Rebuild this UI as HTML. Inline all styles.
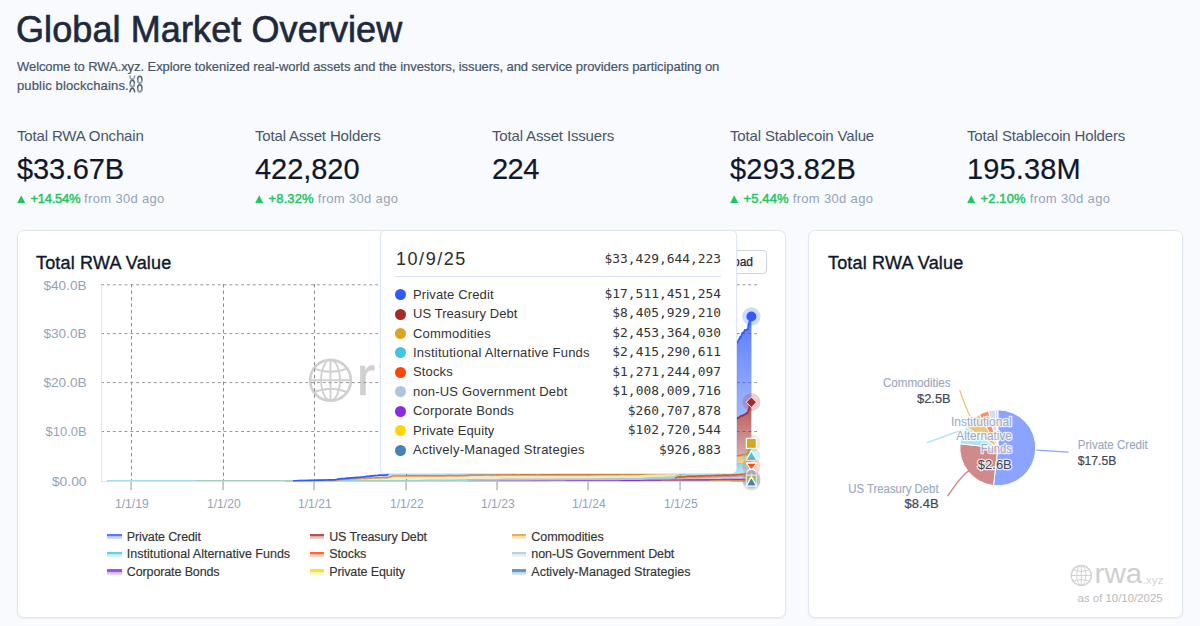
<!DOCTYPE html>
<html lang="en">
<head>
<meta charset="utf-8">
<title>Global Market Overview</title>
<style>
*{box-sizing:border-box;margin:0;padding:0}
html,body{width:1200px;height:626px;overflow:hidden}
body{background:#f8fafe;font-family:"Liberation Sans",sans-serif;color:#1e293b;position:relative}
h1{position:absolute;left:16px;top:7.5px;font-size:36px;font-weight:400;line-height:44px;color:#1e293b;letter-spacing:0.1px;-webkit-text-stroke:0.65px #1e293b;white-space:nowrap}
.sub{position:absolute;left:17px;top:57px;width:760px;white-space:nowrap;font-size:13px;line-height:19px;color:#475569;letter-spacing:-0.07px;-webkit-text-stroke:0.2px #475569}
.stat{position:absolute;top:126px;width:230px;white-space:nowrap}
.stat .l{font-size:15px;line-height:20px;color:#475569;letter-spacing:-0.15px}
.stat .v{font-size:29px;line-height:36px;color:#0f172a;margin-top:4.5px;letter-spacing:-0.55px;-webkit-text-stroke:0.2px #0f172a}
.stat .d{font-size:13px;line-height:18px;color:#94a3b8;margin-top:3.5px;letter-spacing:0.33px}
.stat .d svg{display:inline-block;margin-right:5.2px;vertical-align:0px}
.stat .d b{color:#22c55e;font-weight:400;-webkit-text-stroke:0.45px #22c55e;letter-spacing:-0.3px}
.card{position:absolute;background:#fff;border:1px solid #dfe5f1;border-radius:7px;box-shadow:0 1px 2px rgba(15,23,42,.05)}
.ctitle{position:absolute;font-size:18px;line-height:24px;color:#0f172a;-webkit-text-stroke:0.35px #0f172a;white-space:nowrap;letter-spacing:0.18px;margin-top:0.6px}
svg.ov{position:absolute;left:0;top:0;width:1200px;height:626px;overflow:visible}
.ax{font-size:13px;fill:#94a3b8;font-family:"Liberation Sans",sans-serif}
.lg{position:absolute;font-size:12.5px;line-height:16px;color:#333;white-space:nowrap;letter-spacing:0.03px;-webkit-text-stroke:0.15px #333}
.lg i{position:absolute;left:-19.6px;top:5.6px;width:14.4px;height:5.1px;display:block}
.tip{position:absolute;left:380px;top:230px;width:357px;height:244.4px;background:#fff;border:1px solid #dfe5f3;border-radius:5px;box-shadow:0 1px 3px rgba(15,23,42,.06)}
.tip .dt{position:absolute;left:15px;top:15.8px;font-size:18px;line-height:24px;color:#2b2b2b;letter-spacing:1.55px;white-space:nowrap}
.tip .tot{position:absolute;right:15px;top:19.5px}
.mono{font-family:"DejaVu Sans Mono","Liberation Mono",monospace;font-size:12.9px;line-height:16px;color:#333;white-space:nowrap}
.tip hr{position:absolute;left:14px;right:15px;top:45px;border:0;border-top:1px solid #d9e1f2;height:0}
.row{position:absolute;left:14px;right:15px;height:18px}
.row s{position:absolute;left:-0.4px;top:3.5px;width:11px;height:11px;border-radius:50%;display:block}
.row span{position:absolute;left:18px;top:1px;font-size:13px;line-height:16px;color:#333;white-space:nowrap;letter-spacing:0.22px}
.row em{position:absolute;right:0;top:0.4px;font-style:normal}
.btn{position:absolute;left:690px;top:250px;width:77px;height:24px;border:1px solid #cbd5e1;border-radius:4px;background:#fff;font-size:12px;line-height:22px;color:#1e293b;text-align:right;padding-right:13px;-webkit-text-stroke:0.25px #1e293b}
</style>
</head>
<body>
<h1>Global Market Overview</h1>
<div class="sub">Welcome to RWA.xyz. Explore tokenized real-world assets and the investors, issuers, and service providers participating on<br><span style="letter-spacing:0.14px">public blockchains.</span><svg width="15" height="18" viewBox="0 0 15 18" style="position:absolute;left:112px;top:18px"><g fill="none" stroke-width="1.4" stroke-linecap="round"><path d="M0.9 0.9C1.2 3 2.2 4.2 3.3 4.2S5.4 3 5.7 0.9" stroke="#8a9db0"/><ellipse cx="3.3" cy="8.5" rx="2.1" ry="3.3" stroke="#5d6268"/><path d="M1.1 9.3C1.4 11 2.3 11.9 3.3 11.9S5.2 11 5.5 9.3" stroke="#93a7b8"/><path d="M0.9 16.9C1.3 14.6 2.2 13.3 3.3 13.3S5.3 14.6 5.7 16.9" stroke="#55595f"/><ellipse cx="10.8" cy="4.7" rx="2.15" ry="3.4" stroke="#5d6268"/><path d="M8.5 5.5C8.8 7.3 9.7 8.2 10.8 8.2S12.8 7.3 13.1 5.5" stroke="#93a7b8"/><ellipse cx="10.8" cy="13.3" rx="2.15" ry="3.5" stroke="#5d6268"/><path d="M8.5 14.1C8.8 16 9.7 16.9 10.8 16.9S12.8 16 13.1 14.1" stroke="#93a7b8"/></g></svg></div>
<div class="stat" style="left:17px"><div class="l">Total RWA Onchain</div><div class="v" style="letter-spacing:-0.15px">$33.67B</div><div class="d"><svg width="8.4" height="8.4" viewBox="0 0 8.4 8.4"><path d="M4.2 0.2L8.3 8.2H0.1Z" fill="#22c55e"/></svg><b style="letter-spacing:-0.3px">+14.54%</b> from 30d ago</div></div>
<div class="stat" style="left:255px"><div class="l">Total Asset Holders</div><div class="v" style="letter-spacing:-0.05px">422,820</div><div class="d"><svg width="8.4" height="8.4" viewBox="0 0 8.4 8.4"><path d="M4.2 0.2L8.3 8.2H0.1Z" fill="#22c55e"/></svg><b style="letter-spacing:0.12px">+8.32%</b> from 30d ago</div></div>
<div class="stat" style="left:492px"><div class="l">Total Asset Issuers</div><div class="v" style="letter-spacing:-0.55px">224</div></div>
<div class="stat" style="left:730px"><div class="l">Total Stablecoin Value</div><div class="v" style="letter-spacing:0.23px">$293.82B</div><div class="d"><svg width="8.4" height="8.4" viewBox="0 0 8.4 8.4"><path d="M4.2 0.2L8.3 8.2H0.1Z" fill="#22c55e"/></svg><b style="letter-spacing:0.12px">+5.44%</b> from 30d ago</div></div>
<div class="stat" style="left:967px"><div class="l">Total Stablecoin Holders</div><div class="v" style="letter-spacing:0.12px">195.38M</div><div class="d"><svg width="8.4" height="8.4" viewBox="0 0 8.4 8.4"><path d="M4.2 0.2L8.3 8.2H0.1Z" fill="#22c55e"/></svg><b style="letter-spacing:0.12px">+2.10%</b> from 30d ago</div></div>
<div class="card" style="left:16.6px;top:230px;width:769.4px;height:388px"></div>
<div class="card" style="left:807.8px;top:230px;width:375.2px;height:388px"></div>
<div class="ctitle" style="left:36px;top:250px">Total RWA Value</div>
<div class="ctitle" style="left:828px;top:250px">Total RWA Value</div>
<div class="btn">Download</div>
<svg class="ov" viewBox="0 0 1200 626">
<defs>
<linearGradient id="gAMS" x1="0" y1="0" x2="0" y2="1"><stop offset="0" stop-color="#4682b4" stop-opacity="0.8"/><stop offset="1" stop-color="#4682b4" stop-opacity="0.2"/></linearGradient>
<linearGradient id="gPE" x1="0" y1="0" x2="0" y2="1"><stop offset="0" stop-color="#ffd700" stop-opacity="0.8"/><stop offset="1" stop-color="#ffd700" stop-opacity="0.2"/></linearGradient>
<linearGradient id="gCB" x1="0" y1="0" x2="0" y2="1"><stop offset="0" stop-color="#8a2be2" stop-opacity="0.8"/><stop offset="1" stop-color="#8a2be2" stop-opacity="0.2"/></linearGradient>
<linearGradient id="gNUS" x1="0" y1="0" x2="0" y2="1"><stop offset="0" stop-color="#b0c4de" stop-opacity="0.8"/><stop offset="1" stop-color="#b0c4de" stop-opacity="0.2"/></linearGradient>
<linearGradient id="gSTK" x1="0" y1="0" x2="0" y2="1"><stop offset="0" stop-color="#ff4500" stop-opacity="0.8"/><stop offset="1" stop-color="#ff4500" stop-opacity="0.2"/></linearGradient>
<linearGradient id="gINST" x1="0" y1="0" x2="0" y2="1"><stop offset="0" stop-color="#40c4e8" stop-opacity="0.8"/><stop offset="1" stop-color="#40c4e8" stop-opacity="0.2"/></linearGradient>
<linearGradient id="gCOM" x1="0" y1="0" x2="0" y2="1"><stop offset="0" stop-color="#daa520" stop-opacity="0.8"/><stop offset="1" stop-color="#daa520" stop-opacity="0.2"/></linearGradient>
<linearGradient id="gTRS" x1="0" y1="0" x2="0" y2="1"><stop offset="0" stop-color="#a52a2a" stop-opacity="0.8"/><stop offset="1" stop-color="#a52a2a" stop-opacity="0.2"/></linearGradient>
<linearGradient id="gPC" x1="0" y1="0" x2="0" y2="1"><stop offset="0" stop-color="#2e5bff" stop-opacity="0.8"/><stop offset="1" stop-color="#2e5bff" stop-opacity="0.2"/></linearGradient>
</defs>
<g fill="none" stroke="#d0d0d0"><circle cx="330.5" cy="380.3" r="20.4" stroke-width="2.7"/><g stroke-width="1.9"><ellipse cx="330.5" cy="380.3" rx="9.4" ry="20.4"/><path d="M330.5 360V400.6M310 380.3H351M312.6 368Q330.5 375.6 348.4 368M312.6 392.6Q330.5 385 348.4 392.6"/></g></g>
<text x="356.6" y="394.6" font-size="56" fill="#d0d0d0" stroke="#d0d0d0" stroke-width="0.5" letter-spacing="4.6" font-family="Liberation Sans,sans-serif">rwa</text>
<g stroke="#969696" stroke-width="1" stroke-dasharray="2.9 2.93" fill="none">
<path d="M101.2 284.8H758"/>
<path d="M101.2 333.6H758"/>
<path d="M101.2 382.6H758"/>
<path d="M101.2 431.5H758"/>
</g>
<g stroke="#8c8c8c" stroke-width="1" stroke-dasharray="3.4 3.1" fill="none">
<path d="M131.5 284V481"/>
<path d="M223.5 284V481"/>
<path d="M314.5 284V481"/>
<path d="M406.5 284V481"/>
<path d="M497.5 284V481"/>
<path d="M588.5 284V481"/>
<path d="M680.5 284V481"/>
</g>
<path d="M101.5 285V481.5H758" fill="none" stroke="#dde3f0" stroke-width="1"/>
<path d="M131.05 481.5V490.3" stroke="#a0a0a0" stroke-width="1.1"/>
<path d="M223.05 481.5V490.3" stroke="#a0a0a0" stroke-width="1.1"/>
<path d="M314.05 481.5V490.3" stroke="#a0a0a0" stroke-width="1.1"/>
<path d="M406.05 481.5V490.3" stroke="#a0a0a0" stroke-width="1.1"/>
<path d="M497.05 481.5V490.3" stroke="#a0a0a0" stroke-width="1.1"/>
<path d="M588.05 481.5V490.3" stroke="#a0a0a0" stroke-width="1.1"/>
<path d="M680.05 481.5V490.3" stroke="#a0a0a0" stroke-width="1.1"/>
<text class="ax" x="86.6" y="289.7" text-anchor="end" textLength="43.2" lengthAdjust="spacingAndGlyphs">$40.0B</text>
<text class="ax" x="86.6" y="338.2" text-anchor="end" textLength="43.2" lengthAdjust="spacingAndGlyphs">$30.0B</text>
<text class="ax" x="86.6" y="387.2" text-anchor="end" textLength="43.2" lengthAdjust="spacingAndGlyphs">$20.0B</text>
<text class="ax" x="86.6" y="436.2" text-anchor="end" textLength="41" lengthAdjust="spacingAndGlyphs">$10.0B</text>
<text class="ax" x="86.6" y="485.7" text-anchor="end" textLength="34.7" lengthAdjust="spacingAndGlyphs">$0.00</text>
<text class="ax" x="131.8" y="507.6" text-anchor="middle" textLength="33.7" lengthAdjust="spacingAndGlyphs">1/1/19</text>
<text class="ax" x="223.8" y="507.6" text-anchor="middle" textLength="33.7" lengthAdjust="spacingAndGlyphs">1/1/20</text>
<text class="ax" x="314.8" y="507.6" text-anchor="middle" textLength="33.7" lengthAdjust="spacingAndGlyphs">1/1/21</text>
<text class="ax" x="406.8" y="507.6" text-anchor="middle" textLength="33.7" lengthAdjust="spacingAndGlyphs">1/1/22</text>
<text class="ax" x="497.8" y="507.6" text-anchor="middle" textLength="33.7" lengthAdjust="spacingAndGlyphs">1/1/23</text>
<text class="ax" x="588.8" y="507.6" text-anchor="middle" textLength="33.7" lengthAdjust="spacingAndGlyphs">1/1/24</text>
<text class="ax" x="680.8" y="507.6" text-anchor="middle" textLength="33.7" lengthAdjust="spacingAndGlyphs">1/1/25</text>
<clipPath id="cp"><rect x="101" y="280" width="660" height="201.4"/></clipPath><g clip-path="url(#cp)">
<path d="M101 481 L109 481 L117 481 L125 481 L133 481 L141 481 L149 481 L157 481 L165 481 L173 481 L181 481 L189 481 L197 481 L205 481 L213 481 L221 481 L229 481 L237 481 L238.6 481 L240.2 481 L241.8 481 L243.4 481 L245 481 L246.6 481 L248.2 481 L249.8 481 L251.4 481 L253 481 L254.6 481 L256.2 481 L257.8 481 L259.4 481 L261 481 L262.6 481 L264.2 481 L265.8 481 L267.4 481 L269 481 L270.6 481 L272.2 481 L273.8 481 L275.4 481 L277 481 L278.6 481 L280.2 481 L281.8 481 L283.4 481 L285 481 L286.6 481 L288.2 481 L289.8 481 L291.4 481 L293 481 L294.6 481 L296.2 481 L297.8 481 L299.4 481 L301 481 L302.6 481 L304.2 481 L305.8 481 L307.4 481 L309 481 L310.6 481 L312.2 481 L313.8 481 L315.4 481 L317 481 L318.6 481 L320.2 481 L321.8 481 L323.4 481 L325 481 L326.6 481 L328.2 481 L329.8 481 L331.4 481 L333 481 L334.6 481 L336.2 481 L337.8 481 L339.4 481 L341 481 L342.6 481 L344.2 481 L345.8 481 L347.4 481 L349 481 L350.6 481 L352.2 481 L353.8 481 L355.4 481 L357 481 L358.6 481 L360.2 481 L361.8 481 L363.4 481 L365 481 L366.6 481 L368.2 481 L369.8 481 L371.4 481 L373 481 L374.6 481 L376.2 481 L377.8 481 L379.4 481 L381 481 L382.6 481 L384.2 481 L387.2 481 L390.2 481 L393.2 481 L396.2 481 L399.2 481 L402.2 481 L405.2 481 L408.2 481 L411.2 481 L414.2 481 L417.2 481 L420.2 481 L423.2 481 L426.2 481 L429.2 481 L432.2 481 L435.2 481 L438.2 481 L441.2 481 L444.2 481 L447.2 481 L450.2 481 L453.2 481 L456.2 481 L459.2 481 L462.2 481 L465.2 481 L468.2 481 L471.2 481 L474.2 481 L477.2 481 L480.2 481 L483.2 481 L486.2 481 L489.2 481 L492.2 481 L495.2 481 L498.2 481 L501.2 481 L504.2 481 L507.2 481 L510.2 481 L513.2 481 L516.2 481 L519.2 481 L522.2 481 L525.2 481 L528.2 481 L531.2 481 L534.2 481 L537.2 481 L540.2 481 L543.2 481 L546.2 481 L549.2 481 L552.2 481 L555.2 481 L558.2 481 L561.2 481 L564.2 481 L567.2 481 L570.2 481 L573.2 481 L576.2 481 L579.2 481 L582.2 481 L585.2 481 L588.2 481 L591.2 481 L594.2 481 L597.2 481 L600.2 481 L603.2 481 L606.2 481 L609.2 481 L612.2 481 L615.2 481 L618.2 481 L621.2 481 L624.2 481 L627.2 481 L630.2 481 L633.2 481 L636.2 481 L639.2 481 L642.2 481 L645.2 481 L648.2 481 L651.2 481 L654.2 481 L657.2 481 L660.2 481 L663.2 481 L666.2 481 L669.2 481 L672.2 481 L673.5 481 L674.8 481 L676.1 481 L677.4 481 L678.7 481 L680 481 L681.3 481 L682.6 481 L683.9 481 L685.2 481 L686.5 481 L687.8 481 L689.1 481 L690.4 481 L691.7 481 L693 481 L694.3 481 L695.6 481 L696.9 481 L698.2 481 L699.5 481 L700.8 481 L702.1 481 L703.4 481 L704.7 481 L706 481 L707.3 481 L708.6 481 L709.9 481 L711.2 481 L712.5 481 L713.8 481 L715.1 481 L716.4 481 L717.7 481 L719 481 L720.3 481 L721.6 481 L722.9 481 L724.2 481 L725.5 481 L726.8 481 L728.1 481 L729.4 481 L730.7 481 L732 481 L733.3 481 L734.6 481 L735.9 481 L736.5 481 L737.1 481 L737.7 481 L738.3 481 L738.9 481 L739.5 481 L740.1 481 L740.7 481 L741.3 481 L741.9 481 L742.5 481 L743.1 481 L743.7 481 L744.3 481 L744.9 481 L745.5 481 L746.1 481 L746.7 481 L747.3 481 L747.9 481 L748.5 481 L749.1 481 L749.7 481 L750.3 481 L750.9 481 L751.4 481 L751.4 481 L750.9 481 L750.3 481 L749.7 481 L749.1 481 L748.5 481 L747.9 481 L747.3 481 L746.7 481 L746.1 481 L745.5 481 L744.9 481 L744.3 481 L743.7 481 L743.1 481 L742.5 481 L741.9 481 L741.3 481 L740.7 481 L740.1 481 L739.5 481 L738.9 481 L738.3 481 L737.7 481 L737.1 481 L736.5 481 L735.9 481 L734.6 481 L733.3 481 L732 481 L730.7 481 L729.4 481 L728.1 481 L726.8 481 L725.5 481 L724.2 481 L722.9 481 L721.6 481 L720.3 481 L719 481 L717.7 481 L716.4 481 L715.1 481 L713.8 481 L712.5 481 L711.2 481 L709.9 481 L708.6 481 L707.3 481 L706 481 L704.7 481 L703.4 481 L702.1 481 L700.8 481 L699.5 481 L698.2 481 L696.9 481 L695.6 481 L694.3 481 L693 481 L691.7 481 L690.4 481 L689.1 481 L687.8 481 L686.5 481 L685.2 481 L683.9 481 L682.6 481 L681.3 481 L680 481 L678.7 481 L677.4 481 L676.1 481 L674.8 481 L673.5 481 L672.2 481 L669.2 481 L666.2 481 L663.2 481 L660.2 481 L657.2 481 L654.2 481 L651.2 481 L648.2 481 L645.2 481 L642.2 481 L639.2 481 L636.2 481 L633.2 481 L630.2 481 L627.2 481 L624.2 481 L621.2 481 L618.2 481 L615.2 481 L612.2 481 L609.2 481 L606.2 481 L603.2 481 L600.2 481 L597.2 481 L594.2 481 L591.2 481 L588.2 481 L585.2 481 L582.2 481 L579.2 481 L576.2 481 L573.2 481 L570.2 481 L567.2 481 L564.2 481 L561.2 481 L558.2 481 L555.2 481 L552.2 481 L549.2 481 L546.2 481 L543.2 481 L540.2 481 L537.2 481 L534.2 481 L531.2 481 L528.2 481 L525.2 481 L522.2 481 L519.2 481 L516.2 481 L513.2 481 L510.2 481 L507.2 481 L504.2 481 L501.2 481 L498.2 481 L495.2 481 L492.2 481 L489.2 481 L486.2 481 L483.2 481 L480.2 481 L477.2 481 L474.2 481 L471.2 481 L468.2 481 L465.2 481 L462.2 481 L459.2 481 L456.2 481 L453.2 481 L450.2 481 L447.2 481 L444.2 481 L441.2 481 L438.2 481 L435.2 481 L432.2 481 L429.2 481 L426.2 481 L423.2 481 L420.2 481 L417.2 481 L414.2 481 L411.2 481 L408.2 481 L405.2 481 L402.2 481 L399.2 481 L396.2 481 L393.2 481 L390.2 481 L387.2 481 L384.2 481 L382.6 481 L381 481 L379.4 481 L377.8 481 L376.2 481 L374.6 481 L373 481 L371.4 481 L369.8 481 L368.2 481 L366.6 481 L365 481 L363.4 481 L361.8 481 L360.2 481 L358.6 481 L357 481 L355.4 481 L353.8 481 L352.2 481 L350.6 481 L349 481 L347.4 481 L345.8 481 L344.2 481 L342.6 481 L341 481 L339.4 481 L337.8 481 L336.2 481 L334.6 481 L333 481 L331.4 481 L329.8 481 L328.2 481 L326.6 481 L325 481 L323.4 481 L321.8 481 L320.2 481 L318.6 481 L317 481 L315.4 481 L313.8 481 L312.2 481 L310.6 481 L309 481 L307.4 481 L305.8 481 L304.2 481 L302.6 481 L301 481 L299.4 481 L297.8 481 L296.2 481 L294.6 481 L293 481 L291.4 481 L289.8 481 L288.2 481 L286.6 481 L285 481 L283.4 481 L281.8 481 L280.2 481 L278.6 481 L277 481 L275.4 481 L273.8 481 L272.2 481 L270.6 481 L269 481 L267.4 481 L265.8 481 L264.2 481 L262.6 481 L261 481 L259.4 481 L257.8 481 L256.2 481 L254.6 481 L253 481 L251.4 481 L249.8 481 L248.2 481 L246.6 481 L245 481 L243.4 481 L241.8 481 L240.2 481 L238.6 481 L237 481 L229 481 L221 481 L213 481 L205 481 L197 481 L189 481 L181 481 L173 481 L165 481 L157 481 L149 481 L141 481 L133 481 L125 481 L117 481 L109 481 L101 481 Z" fill="url(#gAMS)"/>
<path d="M730.7 481 L732 481 L733.3 481 L734.6 481 L735.9 481 L736.5 481 L737.1 481 L737.7 481 L738.3 481 L738.9 481 L739.5 481 L740.1 481 L740.7 481 L741.3 481 L741.9 481 L742.5 481 L743.1 481 L743.7 481 L744.3 481 L744.9 481 L745.5 481 L746.1 481 L746.7 481 L747.3 481 L747.9 481 L748.5 481 L749.1 481 L749.7 481 L750.3 481 L750.9 481 L751.4 481" fill="none" stroke="#4682b4" stroke-width="1.7" stroke-linejoin="round"/>
<path d="M101 481 L109 481 L117 481 L125 481 L133 481 L141 481 L149 481 L157 481 L165 481 L173 481 L181 481 L189 481 L197 481 L205 481 L213 481 L221 481 L229 481 L237 481 L238.6 481 L240.2 481 L241.8 481 L243.4 481 L245 481 L246.6 481 L248.2 481 L249.8 481 L251.4 481 L253 481 L254.6 481 L256.2 481 L257.8 481 L259.4 481 L261 481 L262.6 481 L264.2 481 L265.8 481 L267.4 481 L269 481 L270.6 481 L272.2 481 L273.8 481 L275.4 481 L277 481 L278.6 481 L280.2 481 L281.8 481 L283.4 481 L285 481 L286.6 481 L288.2 481 L289.8 481 L291.4 481 L293 481 L294.6 481 L296.2 481 L297.8 481 L299.4 481 L301 481 L302.6 481 L304.2 481 L305.8 481 L307.4 481 L309 481 L310.6 481 L312.2 481 L313.8 481 L315.4 481 L317 481 L318.6 481 L320.2 481 L321.8 481 L323.4 481 L325 481 L326.6 481 L328.2 481 L329.8 481 L331.4 481 L333 481 L334.6 481 L336.2 481 L337.8 481 L339.4 481 L341 481 L342.6 481 L344.2 481 L345.8 481 L347.4 481 L349 481 L350.6 481 L352.2 481 L353.8 481 L355.4 481 L357 481 L358.6 481 L360.2 481 L361.8 481 L363.4 481 L365 481 L366.6 481 L368.2 481 L369.8 481 L371.4 481 L373 481 L374.6 481 L376.2 481 L377.8 481 L379.4 481 L381 481 L382.6 481 L384.2 481 L387.2 481 L390.2 481 L393.2 481 L396.2 481 L399.2 481 L402.2 481 L405.2 481 L408.2 481 L411.2 481 L414.2 481 L417.2 481 L420.2 481 L423.2 481 L426.2 481 L429.2 481 L432.2 481 L435.2 481 L438.2 481 L441.2 481 L444.2 481 L447.2 481 L450.2 481 L453.2 481 L456.2 481 L459.2 481 L462.2 481 L465.2 481 L468.2 481 L471.2 480.9 L474.2 480.9 L477.2 480.9 L480.2 480.9 L483.2 480.9 L486.2 480.9 L489.2 480.9 L492.2 480.9 L495.2 480.9 L498.2 480.9 L501.2 480.9 L504.2 480.9 L507.2 480.9 L510.2 480.9 L513.2 480.9 L516.2 480.9 L519.2 480.9 L522.2 480.9 L525.2 480.9 L528.2 480.9 L531.2 480.9 L534.2 480.9 L537.2 480.9 L540.2 480.9 L543.2 480.9 L546.2 480.9 L549.2 480.9 L552.2 480.9 L555.2 480.9 L558.2 480.9 L561.2 480.9 L564.2 480.9 L567.2 480.9 L570.2 480.9 L573.2 480.9 L576.2 480.9 L579.2 480.9 L582.2 480.9 L585.2 480.9 L588.2 480.9 L591.2 480.9 L594.2 480.8 L597.2 480.8 L600.2 480.8 L603.2 480.8 L606.2 480.8 L609.2 480.8 L612.2 480.8 L615.2 480.8 L618.2 480.8 L621.2 480.8 L624.2 480.8 L627.2 480.8 L630.2 480.8 L633.2 480.8 L636.2 480.8 L639.2 480.8 L642.2 480.8 L645.2 480.8 L648.2 480.8 L651.2 480.8 L654.2 480.8 L657.2 480.8 L660.2 480.8 L663.2 480.8 L666.2 480.8 L669.2 480.8 L672.2 480.8 L673.5 480.8 L674.8 480.8 L676.1 480.8 L677.4 480.8 L678.7 480.7 L680 480.7 L681.3 480.7 L682.6 480.7 L683.9 480.7 L685.2 480.7 L686.5 480.7 L687.8 480.7 L689.1 480.7 L690.4 480.7 L691.7 480.7 L693 480.7 L694.3 480.7 L695.6 480.7 L696.9 480.7 L698.2 480.7 L699.5 480.7 L700.8 480.7 L702.1 480.7 L703.4 480.7 L704.7 480.7 L706 480.7 L707.3 480.7 L708.6 480.7 L709.9 480.7 L711.2 480.7 L712.5 480.7 L713.8 480.7 L715.1 480.6 L716.4 480.6 L717.7 480.6 L719 480.6 L720.3 480.6 L721.6 480.6 L722.9 480.6 L724.2 480.6 L725.5 480.6 L726.8 480.6 L728.1 480.6 L729.4 480.6 L730.7 480.6 L732 480.6 L733.3 480.6 L734.6 480.6 L735.9 480.6 L736.5 480.6 L737.1 480.6 L737.7 480.5 L738.3 480.5 L738.9 480.5 L739.5 480.5 L740.1 480.5 L740.7 480.5 L741.3 480.5 L741.9 480.5 L742.5 480.5 L743.1 480.5 L743.7 480.5 L744.3 480.5 L744.9 480.5 L745.5 480.5 L746.1 480.5 L746.7 480.5 L747.3 480.5 L747.9 480.5 L748.5 480.5 L749.1 480.5 L749.7 480.5 L750.3 480.5 L750.9 480.5 L751.4 480.5 L751.4 481 L750.9 481 L750.3 481 L749.7 481 L749.1 481 L748.5 481 L747.9 481 L747.3 481 L746.7 481 L746.1 481 L745.5 481 L744.9 481 L744.3 481 L743.7 481 L743.1 481 L742.5 481 L741.9 481 L741.3 481 L740.7 481 L740.1 481 L739.5 481 L738.9 481 L738.3 481 L737.7 481 L737.1 481 L736.5 481 L735.9 481 L734.6 481 L733.3 481 L732 481 L730.7 481 L729.4 481 L728.1 481 L726.8 481 L725.5 481 L724.2 481 L722.9 481 L721.6 481 L720.3 481 L719 481 L717.7 481 L716.4 481 L715.1 481 L713.8 481 L712.5 481 L711.2 481 L709.9 481 L708.6 481 L707.3 481 L706 481 L704.7 481 L703.4 481 L702.1 481 L700.8 481 L699.5 481 L698.2 481 L696.9 481 L695.6 481 L694.3 481 L693 481 L691.7 481 L690.4 481 L689.1 481 L687.8 481 L686.5 481 L685.2 481 L683.9 481 L682.6 481 L681.3 481 L680 481 L678.7 481 L677.4 481 L676.1 481 L674.8 481 L673.5 481 L672.2 481 L669.2 481 L666.2 481 L663.2 481 L660.2 481 L657.2 481 L654.2 481 L651.2 481 L648.2 481 L645.2 481 L642.2 481 L639.2 481 L636.2 481 L633.2 481 L630.2 481 L627.2 481 L624.2 481 L621.2 481 L618.2 481 L615.2 481 L612.2 481 L609.2 481 L606.2 481 L603.2 481 L600.2 481 L597.2 481 L594.2 481 L591.2 481 L588.2 481 L585.2 481 L582.2 481 L579.2 481 L576.2 481 L573.2 481 L570.2 481 L567.2 481 L564.2 481 L561.2 481 L558.2 481 L555.2 481 L552.2 481 L549.2 481 L546.2 481 L543.2 481 L540.2 481 L537.2 481 L534.2 481 L531.2 481 L528.2 481 L525.2 481 L522.2 481 L519.2 481 L516.2 481 L513.2 481 L510.2 481 L507.2 481 L504.2 481 L501.2 481 L498.2 481 L495.2 481 L492.2 481 L489.2 481 L486.2 481 L483.2 481 L480.2 481 L477.2 481 L474.2 481 L471.2 481 L468.2 481 L465.2 481 L462.2 481 L459.2 481 L456.2 481 L453.2 481 L450.2 481 L447.2 481 L444.2 481 L441.2 481 L438.2 481 L435.2 481 L432.2 481 L429.2 481 L426.2 481 L423.2 481 L420.2 481 L417.2 481 L414.2 481 L411.2 481 L408.2 481 L405.2 481 L402.2 481 L399.2 481 L396.2 481 L393.2 481 L390.2 481 L387.2 481 L384.2 481 L382.6 481 L381 481 L379.4 481 L377.8 481 L376.2 481 L374.6 481 L373 481 L371.4 481 L369.8 481 L368.2 481 L366.6 481 L365 481 L363.4 481 L361.8 481 L360.2 481 L358.6 481 L357 481 L355.4 481 L353.8 481 L352.2 481 L350.6 481 L349 481 L347.4 481 L345.8 481 L344.2 481 L342.6 481 L341 481 L339.4 481 L337.8 481 L336.2 481 L334.6 481 L333 481 L331.4 481 L329.8 481 L328.2 481 L326.6 481 L325 481 L323.4 481 L321.8 481 L320.2 481 L318.6 481 L317 481 L315.4 481 L313.8 481 L312.2 481 L310.6 481 L309 481 L307.4 481 L305.8 481 L304.2 481 L302.6 481 L301 481 L299.4 481 L297.8 481 L296.2 481 L294.6 481 L293 481 L291.4 481 L289.8 481 L288.2 481 L286.6 481 L285 481 L283.4 481 L281.8 481 L280.2 481 L278.6 481 L277 481 L275.4 481 L273.8 481 L272.2 481 L270.6 481 L269 481 L267.4 481 L265.8 481 L264.2 481 L262.6 481 L261 481 L259.4 481 L257.8 481 L256.2 481 L254.6 481 L253 481 L251.4 481 L249.8 481 L248.2 481 L246.6 481 L245 481 L243.4 481 L241.8 481 L240.2 481 L238.6 481 L237 481 L229 481 L221 481 L213 481 L205 481 L197 481 L189 481 L181 481 L173 481 L165 481 L157 481 L149 481 L141 481 L133 481 L125 481 L117 481 L109 481 L101 481 Z" fill="url(#gPE)"/>
<path d="M441.2 481 L444.2 481 L447.2 481 L450.2 481 L453.2 481 L456.2 481 L459.2 481 L462.2 481 L465.2 481 L468.2 481 L471.2 480.9 L474.2 480.9 L477.2 480.9 L480.2 480.9 L483.2 480.9 L486.2 480.9 L489.2 480.9 L492.2 480.9 L495.2 480.9 L498.2 480.9 L501.2 480.9 L504.2 480.9 L507.2 480.9 L510.2 480.9 L513.2 480.9 L516.2 480.9 L519.2 480.9 L522.2 480.9 L525.2 480.9 L528.2 480.9 L531.2 480.9 L534.2 480.9 L537.2 480.9 L540.2 480.9 L543.2 480.9 L546.2 480.9 L549.2 480.9 L552.2 480.9 L555.2 480.9 L558.2 480.9 L561.2 480.9 L564.2 480.9 L567.2 480.9 L570.2 480.9 L573.2 480.9 L576.2 480.9 L579.2 480.9 L582.2 480.9 L585.2 480.9 L588.2 480.9 L591.2 480.9 L594.2 480.8 L597.2 480.8 L600.2 480.8 L603.2 480.8 L606.2 480.8 L609.2 480.8 L612.2 480.8 L615.2 480.8 L618.2 480.8 L621.2 480.8 L624.2 480.8 L627.2 480.8 L630.2 480.8 L633.2 480.8 L636.2 480.8 L639.2 480.8 L642.2 480.8 L645.2 480.8 L648.2 480.8 L651.2 480.8 L654.2 480.8 L657.2 480.8 L660.2 480.8 L663.2 480.8 L666.2 480.8 L669.2 480.8 L672.2 480.8 L673.5 480.8 L674.8 480.8 L676.1 480.8 L677.4 480.8 L678.7 480.7 L680 480.7 L681.3 480.7 L682.6 480.7 L683.9 480.7 L685.2 480.7 L686.5 480.7 L687.8 480.7 L689.1 480.7 L690.4 480.7 L691.7 480.7 L693 480.7 L694.3 480.7 L695.6 480.7 L696.9 480.7 L698.2 480.7 L699.5 480.7 L700.8 480.7 L702.1 480.7 L703.4 480.7 L704.7 480.7 L706 480.7 L707.3 480.7 L708.6 480.7 L709.9 480.7 L711.2 480.7 L712.5 480.7 L713.8 480.7 L715.1 480.6 L716.4 480.6 L717.7 480.6 L719 480.6 L720.3 480.6 L721.6 480.6 L722.9 480.6 L724.2 480.6 L725.5 480.6 L726.8 480.6 L728.1 480.6 L729.4 480.6 L730.7 480.6 L732 480.6 L733.3 480.6 L734.6 480.6 L735.9 480.6 L736.5 480.6 L737.1 480.6 L737.7 480.5 L738.3 480.5 L738.9 480.5 L739.5 480.5 L740.1 480.5 L740.7 480.5 L741.3 480.5 L741.9 480.5 L742.5 480.5 L743.1 480.5 L743.7 480.5 L744.3 480.5 L744.9 480.5 L745.5 480.5 L746.1 480.5 L746.7 480.5 L747.3 480.5 L747.9 480.5 L748.5 480.5 L749.1 480.5 L749.7 480.5 L750.3 480.5 L750.9 480.5 L751.4 480.5" fill="none" stroke="#ffd700" stroke-width="1.7" stroke-linejoin="round"/>
<path d="M101 481 L109 481 L117 481 L125 481 L133 481 L141 481 L149 481 L157 481 L165 481 L173 481 L181 481 L189 481 L197 481 L205 481 L213 481 L221 481 L229 481 L237 481 L238.6 481 L240.2 481 L241.8 481 L243.4 481 L245 481 L246.6 481 L248.2 481 L249.8 481 L251.4 481 L253 481 L254.6 481 L256.2 481 L257.8 481 L259.4 481 L261 481 L262.6 481 L264.2 481 L265.8 481 L267.4 481 L269 481 L270.6 481 L272.2 481 L273.8 481 L275.4 481 L277 481 L278.6 481 L280.2 481 L281.8 481 L283.4 481 L285 481 L286.6 481 L288.2 481 L289.8 481 L291.4 481 L293 481 L294.6 481 L296.2 481 L297.8 481 L299.4 481 L301 481 L302.6 481 L304.2 481 L305.8 481 L307.4 481 L309 481 L310.6 481 L312.2 481 L313.8 481 L315.4 481 L317 481 L318.6 481 L320.2 481 L321.8 481 L323.4 481 L325 481 L326.6 481 L328.2 481 L329.8 481 L331.4 481 L333 481 L334.6 481 L336.2 481 L337.8 481 L339.4 481 L341 481 L342.6 481 L344.2 481 L345.8 481 L347.4 481 L349 481 L350.6 481 L352.2 481 L353.8 481 L355.4 481 L357 481 L358.6 481 L360.2 481 L361.8 481 L363.4 481 L365 481 L366.6 481 L368.2 481 L369.8 481 L371.4 481 L373 481 L374.6 481 L376.2 481 L377.8 481 L379.4 481 L381 481 L382.6 481 L384.2 481 L387.2 481 L390.2 481 L393.2 481 L396.2 481 L399.2 481 L402.2 481 L405.2 481 L408.2 481 L411.2 481 L414.2 481 L417.2 481 L420.2 481 L423.2 481 L426.2 481 L429.2 481 L432.2 481 L435.2 481 L438.2 481 L441.2 481 L444.2 481 L447.2 481 L450.2 481 L453.2 481 L456.2 481 L459.2 481 L462.2 481 L465.2 481 L468.2 480.6 L471.2 480.4 L474.2 480.4 L477.2 480.4 L480.2 480.3 L483.2 480.3 L486.2 480.3 L489.2 480.3 L492.2 480.3 L495.2 480.3 L498.2 480.3 L501.2 480.3 L504.2 480.3 L507.2 480.3 L510.2 480.3 L513.2 480.3 L516.2 480.3 L519.2 480.3 L522.2 480.3 L525.2 480.3 L528.2 480.3 L531.2 480.3 L534.2 480.3 L537.2 480.3 L540.2 480.3 L543.2 480.3 L546.2 480.3 L549.2 480.3 L552.2 480.2 L555.2 480.2 L558.2 480.2 L561.2 480.2 L564.2 480.2 L567.2 480.2 L570.2 480.2 L573.2 480.2 L576.2 480.2 L579.2 480.2 L582.2 480.2 L585.2 480.2 L588.2 480.2 L591.2 480.2 L594.2 480.2 L597.2 480.2 L600.2 480.2 L603.2 480.2 L606.2 480.2 L609.2 480.2 L612.2 480.2 L615.2 480.2 L618.2 480.2 L621.2 480.2 L624.2 480.1 L627.2 480.1 L630.2 480.1 L633.2 480.1 L636.2 480.1 L639.2 480.1 L642.2 480 L645.2 479.8 L648.2 479.8 L651.2 479.8 L654.2 479.8 L657.2 479.8 L660.2 479.8 L663.2 479.7 L666.2 479.7 L669.2 479.7 L672.2 479.7 L673.5 479.7 L674.8 479.7 L676.1 479.7 L677.4 479.7 L678.7 479.7 L680 479.7 L681.3 479.7 L682.6 479.7 L683.9 479.7 L685.2 479.7 L686.5 479.7 L687.8 479.7 L689.1 479.7 L690.4 479.6 L691.7 479.6 L693 479.7 L694.3 479.7 L695.6 479.7 L696.9 479.6 L698.2 479.6 L699.5 479.6 L700.8 479.6 L702.1 479.6 L703.4 479.6 L704.7 479.6 L706 479.6 L707.3 479.6 L708.6 479.6 L709.9 479.5 L711.2 479.5 L712.5 479.5 L713.8 479.5 L715.1 479.5 L716.4 479.5 L717.7 479.5 L719 479.5 L720.3 479.5 L721.6 479.5 L722.9 479.4 L724.2 479.4 L725.5 479.4 L726.8 479.4 L728.1 479.4 L729.4 479.4 L730.7 479.4 L732 479.4 L733.3 479.4 L734.6 479.3 L735.9 479.3 L736.5 479.3 L737.1 479.3 L737.7 479.3 L738.3 479.3 L738.9 479.3 L739.5 479.3 L740.1 479.3 L740.7 479.3 L741.3 479.3 L741.9 479.3 L742.5 479.3 L743.1 479.3 L743.7 479.3 L744.3 479.3 L744.9 479.3 L745.5 479.3 L746.1 479.2 L746.7 479.3 L747.3 479.2 L747.9 479.2 L748.5 479.2 L749.1 479.2 L749.7 479.2 L750.3 479.2 L750.9 479.2 L751.4 479.2 L751.4 480.5 L750.9 480.5 L750.3 480.5 L749.7 480.5 L749.1 480.5 L748.5 480.5 L747.9 480.5 L747.3 480.5 L746.7 480.5 L746.1 480.5 L745.5 480.5 L744.9 480.5 L744.3 480.5 L743.7 480.5 L743.1 480.5 L742.5 480.5 L741.9 480.5 L741.3 480.5 L740.7 480.5 L740.1 480.5 L739.5 480.5 L738.9 480.5 L738.3 480.5 L737.7 480.5 L737.1 480.6 L736.5 480.6 L735.9 480.6 L734.6 480.6 L733.3 480.6 L732 480.6 L730.7 480.6 L729.4 480.6 L728.1 480.6 L726.8 480.6 L725.5 480.6 L724.2 480.6 L722.9 480.6 L721.6 480.6 L720.3 480.6 L719 480.6 L717.7 480.6 L716.4 480.6 L715.1 480.6 L713.8 480.7 L712.5 480.7 L711.2 480.7 L709.9 480.7 L708.6 480.7 L707.3 480.7 L706 480.7 L704.7 480.7 L703.4 480.7 L702.1 480.7 L700.8 480.7 L699.5 480.7 L698.2 480.7 L696.9 480.7 L695.6 480.7 L694.3 480.7 L693 480.7 L691.7 480.7 L690.4 480.7 L689.1 480.7 L687.8 480.7 L686.5 480.7 L685.2 480.7 L683.9 480.7 L682.6 480.7 L681.3 480.7 L680 480.7 L678.7 480.7 L677.4 480.8 L676.1 480.8 L674.8 480.8 L673.5 480.8 L672.2 480.8 L669.2 480.8 L666.2 480.8 L663.2 480.8 L660.2 480.8 L657.2 480.8 L654.2 480.8 L651.2 480.8 L648.2 480.8 L645.2 480.8 L642.2 480.8 L639.2 480.8 L636.2 480.8 L633.2 480.8 L630.2 480.8 L627.2 480.8 L624.2 480.8 L621.2 480.8 L618.2 480.8 L615.2 480.8 L612.2 480.8 L609.2 480.8 L606.2 480.8 L603.2 480.8 L600.2 480.8 L597.2 480.8 L594.2 480.8 L591.2 480.9 L588.2 480.9 L585.2 480.9 L582.2 480.9 L579.2 480.9 L576.2 480.9 L573.2 480.9 L570.2 480.9 L567.2 480.9 L564.2 480.9 L561.2 480.9 L558.2 480.9 L555.2 480.9 L552.2 480.9 L549.2 480.9 L546.2 480.9 L543.2 480.9 L540.2 480.9 L537.2 480.9 L534.2 480.9 L531.2 480.9 L528.2 480.9 L525.2 480.9 L522.2 480.9 L519.2 480.9 L516.2 480.9 L513.2 480.9 L510.2 480.9 L507.2 480.9 L504.2 480.9 L501.2 480.9 L498.2 480.9 L495.2 480.9 L492.2 480.9 L489.2 480.9 L486.2 480.9 L483.2 480.9 L480.2 480.9 L477.2 480.9 L474.2 480.9 L471.2 480.9 L468.2 481 L465.2 481 L462.2 481 L459.2 481 L456.2 481 L453.2 481 L450.2 481 L447.2 481 L444.2 481 L441.2 481 L438.2 481 L435.2 481 L432.2 481 L429.2 481 L426.2 481 L423.2 481 L420.2 481 L417.2 481 L414.2 481 L411.2 481 L408.2 481 L405.2 481 L402.2 481 L399.2 481 L396.2 481 L393.2 481 L390.2 481 L387.2 481 L384.2 481 L382.6 481 L381 481 L379.4 481 L377.8 481 L376.2 481 L374.6 481 L373 481 L371.4 481 L369.8 481 L368.2 481 L366.6 481 L365 481 L363.4 481 L361.8 481 L360.2 481 L358.6 481 L357 481 L355.4 481 L353.8 481 L352.2 481 L350.6 481 L349 481 L347.4 481 L345.8 481 L344.2 481 L342.6 481 L341 481 L339.4 481 L337.8 481 L336.2 481 L334.6 481 L333 481 L331.4 481 L329.8 481 L328.2 481 L326.6 481 L325 481 L323.4 481 L321.8 481 L320.2 481 L318.6 481 L317 481 L315.4 481 L313.8 481 L312.2 481 L310.6 481 L309 481 L307.4 481 L305.8 481 L304.2 481 L302.6 481 L301 481 L299.4 481 L297.8 481 L296.2 481 L294.6 481 L293 481 L291.4 481 L289.8 481 L288.2 481 L286.6 481 L285 481 L283.4 481 L281.8 481 L280.2 481 L278.6 481 L277 481 L275.4 481 L273.8 481 L272.2 481 L270.6 481 L269 481 L267.4 481 L265.8 481 L264.2 481 L262.6 481 L261 481 L259.4 481 L257.8 481 L256.2 481 L254.6 481 L253 481 L251.4 481 L249.8 481 L248.2 481 L246.6 481 L245 481 L243.4 481 L241.8 481 L240.2 481 L238.6 481 L237 481 L229 481 L221 481 L213 481 L205 481 L197 481 L189 481 L181 481 L173 481 L165 481 L157 481 L149 481 L141 481 L133 481 L125 481 L117 481 L109 481 L101 481 Z" fill="url(#gCB)"/>
<path d="M468.2 480.6 L471.2 480.4 L474.2 480.4 L477.2 480.4 L480.2 480.3 L483.2 480.3 L486.2 480.3 L489.2 480.3 L492.2 480.3 L495.2 480.3 L498.2 480.3 L501.2 480.3 L504.2 480.3 L507.2 480.3 L510.2 480.3 L513.2 480.3 L516.2 480.3 L519.2 480.3 L522.2 480.3 L525.2 480.3 L528.2 480.3 L531.2 480.3 L534.2 480.3 L537.2 480.3 L540.2 480.3 L543.2 480.3 L546.2 480.3 L549.2 480.3 L552.2 480.2 L555.2 480.2 L558.2 480.2 L561.2 480.2 L564.2 480.2 L567.2 480.2 L570.2 480.2 L573.2 480.2 L576.2 480.2 L579.2 480.2 L582.2 480.2 L585.2 480.2 L588.2 480.2 L591.2 480.2 L594.2 480.2 L597.2 480.2 L600.2 480.2 L603.2 480.2 L606.2 480.2 L609.2 480.2 L612.2 480.2 L615.2 480.2 L618.2 480.2 L621.2 480.2 L624.2 480.1 L627.2 480.1 L630.2 480.1 L633.2 480.1 L636.2 480.1 L639.2 480.1 L642.2 480 L645.2 479.8 L648.2 479.8 L651.2 479.8 L654.2 479.8 L657.2 479.8 L660.2 479.8 L663.2 479.7 L666.2 479.7 L669.2 479.7 L672.2 479.7 L673.5 479.7 L674.8 479.7 L676.1 479.7 L677.4 479.7 L678.7 479.7 L680 479.7 L681.3 479.7 L682.6 479.7 L683.9 479.7 L685.2 479.7 L686.5 479.7 L687.8 479.7 L689.1 479.7 L690.4 479.6 L691.7 479.6 L693 479.7 L694.3 479.7 L695.6 479.7 L696.9 479.6 L698.2 479.6 L699.5 479.6 L700.8 479.6 L702.1 479.6 L703.4 479.6 L704.7 479.6 L706 479.6 L707.3 479.6 L708.6 479.6 L709.9 479.5 L711.2 479.5 L712.5 479.5 L713.8 479.5 L715.1 479.5 L716.4 479.5 L717.7 479.5 L719 479.5 L720.3 479.5 L721.6 479.5 L722.9 479.4 L724.2 479.4 L725.5 479.4 L726.8 479.4 L728.1 479.4 L729.4 479.4 L730.7 479.4 L732 479.4 L733.3 479.4 L734.6 479.3 L735.9 479.3 L736.5 479.3 L737.1 479.3 L737.7 479.3 L738.3 479.3 L738.9 479.3 L739.5 479.3 L740.1 479.3 L740.7 479.3 L741.3 479.3 L741.9 479.3 L742.5 479.3 L743.1 479.3 L743.7 479.3 L744.3 479.3 L744.9 479.3 L745.5 479.3 L746.1 479.2 L746.7 479.3 L747.3 479.2 L747.9 479.2 L748.5 479.2 L749.1 479.2 L749.7 479.2 L750.3 479.2 L750.9 479.2 L751.4 479.2" fill="none" stroke="#8a2be2" stroke-width="1.7" stroke-linejoin="round"/>
<path d="M101 481 L109 481 L117 481 L125 481 L133 481 L141 481 L149 481 L157 481 L165 481 L173 481 L181 481 L189 481 L197 481 L205 481 L213 481 L221 481 L229 481 L237 481 L238.6 481 L240.2 481 L241.8 481 L243.4 481 L245 481 L246.6 481 L248.2 481 L249.8 481 L251.4 481 L253 481 L254.6 481 L256.2 481 L257.8 481 L259.4 481 L261 481 L262.6 481 L264.2 481 L265.8 481 L267.4 481 L269 481 L270.6 481 L272.2 481 L273.8 481 L275.4 481 L277 481 L278.6 481 L280.2 481 L281.8 481 L283.4 481 L285 481 L286.6 481 L288.2 481 L289.8 481 L291.4 481 L293 481 L294.6 481 L296.2 481 L297.8 481 L299.4 481 L301 481 L302.6 481 L304.2 481 L305.8 481 L307.4 481 L309 481 L310.6 481 L312.2 481 L313.8 481 L315.4 481 L317 481 L318.6 481 L320.2 481 L321.8 481 L323.4 481 L325 481 L326.6 481 L328.2 481 L329.8 481 L331.4 481 L333 481 L334.6 481 L336.2 481 L337.8 481 L339.4 481 L341 480.9 L342.6 480.9 L344.2 480.9 L345.8 480.9 L347.4 480.9 L349 480.9 L350.6 480.9 L352.2 480.9 L353.8 480.9 L355.4 480.9 L357 480.9 L358.6 480.9 L360.2 480.9 L361.8 480.9 L363.4 480.9 L365 480.9 L366.6 480.9 L368.2 480.9 L369.8 480.9 L371.4 480.9 L373 480.9 L374.6 480.9 L376.2 480.9 L377.8 480.9 L379.4 480.9 L381 480.8 L382.6 480.8 L384.2 480.8 L387.2 480.8 L390.2 480.8 L393.2 480.8 L396.2 480.8 L399.2 480.8 L402.2 480.8 L405.2 480.8 L408.2 480.8 L411.2 480.8 L414.2 480.8 L417.2 480.8 L420.2 480.8 L423.2 480.7 L426.2 480.7 L429.2 480.7 L432.2 480.7 L435.2 480.7 L438.2 480.7 L441.2 480.6 L444.2 480.6 L447.2 480.6 L450.2 480.6 L453.2 480.6 L456.2 480.6 L459.2 480.5 L462.2 480.5 L465.2 480.5 L468.2 480.2 L471.2 479.9 L474.2 479.9 L477.2 479.9 L480.2 479.8 L483.2 479.8 L486.2 479.8 L489.2 479.8 L492.2 479.8 L495.2 479.8 L498.2 479.8 L501.2 479.7 L504.2 479.7 L507.2 479.7 L510.2 479.7 L513.2 479.7 L516.2 479.7 L519.2 479.7 L522.2 479.7 L525.2 479.7 L528.2 479.7 L531.2 479.7 L534.2 479.6 L537.2 479.6 L540.2 479.6 L543.2 479.6 L546.2 479.6 L549.2 479.6 L552.2 479.6 L555.2 479.6 L558.2 479.6 L561.2 479.6 L564.2 479.6 L567.2 479.5 L570.2 479.5 L573.2 479.5 L576.2 479.5 L579.2 479.5 L582.2 479.5 L585.2 479.5 L588.2 479.5 L591.2 479.5 L594.2 479.4 L597.2 479.4 L600.2 479.4 L603.2 479.4 L606.2 479.3 L609.2 479.3 L612.2 479.3 L615.2 479.3 L618.2 479.3 L621.2 479.2 L624.2 479.2 L627.2 479.2 L630.2 479.2 L633.2 479.1 L636.2 479.1 L639.2 479.1 L642.2 478.9 L645.2 478.8 L648.2 478.7 L651.2 478.7 L654.2 478.7 L657.2 478.6 L660.2 478.6 L663.2 478.6 L666.2 478.6 L669.2 478.6 L672.2 478.5 L673.5 478.5 L674.8 478.5 L676.1 478.5 L677.4 478.5 L678.7 478.4 L680 478.4 L681.3 478.3 L682.6 478.3 L683.9 478.2 L685.2 478.2 L686.5 478.1 L687.8 478.1 L689.1 478.1 L690.4 478 L691.7 478 L693 477.9 L694.3 477.9 L695.6 477.8 L696.9 477.8 L698.2 477.7 L699.5 477.7 L700.8 477.6 L702.1 477.6 L703.4 477.6 L704.7 477.5 L706 477.5 L707.3 477.5 L708.6 477.4 L709.9 477.4 L711.2 477.3 L712.5 477.3 L713.8 477.2 L715.1 477.2 L716.4 477.2 L717.7 477.1 L719 477.1 L720.3 477.1 L721.6 477.1 L722.9 477 L724.2 477 L725.5 476.9 L726.8 476.9 L728.1 476.9 L729.4 476.9 L730.7 476.8 L732 476.8 L733.3 476.7 L734.6 476.7 L735.9 476.7 L736.5 476.6 L737.1 476.6 L737.7 476.6 L738.3 476.5 L738.9 476.5 L739.5 476.5 L740.1 476.4 L740.7 476.4 L741.3 476.4 L741.9 476.4 L742.5 476.3 L743.1 476.3 L743.7 476.2 L744.3 476.2 L744.9 476.2 L745.5 476.1 L746.1 476.1 L746.7 476.1 L747.3 476.1 L747.9 476 L748.5 475.8 L749.1 475.5 L749.7 475.1 L750.3 474.8 L750.9 474.5 L751.4 474.2 L751.4 479.2 L750.9 479.2 L750.3 479.2 L749.7 479.2 L749.1 479.2 L748.5 479.2 L747.9 479.2 L747.3 479.2 L746.7 479.3 L746.1 479.2 L745.5 479.3 L744.9 479.3 L744.3 479.3 L743.7 479.3 L743.1 479.3 L742.5 479.3 L741.9 479.3 L741.3 479.3 L740.7 479.3 L740.1 479.3 L739.5 479.3 L738.9 479.3 L738.3 479.3 L737.7 479.3 L737.1 479.3 L736.5 479.3 L735.9 479.3 L734.6 479.3 L733.3 479.4 L732 479.4 L730.7 479.4 L729.4 479.4 L728.1 479.4 L726.8 479.4 L725.5 479.4 L724.2 479.4 L722.9 479.4 L721.6 479.5 L720.3 479.5 L719 479.5 L717.7 479.5 L716.4 479.5 L715.1 479.5 L713.8 479.5 L712.5 479.5 L711.2 479.5 L709.9 479.5 L708.6 479.6 L707.3 479.6 L706 479.6 L704.7 479.6 L703.4 479.6 L702.1 479.6 L700.8 479.6 L699.5 479.6 L698.2 479.6 L696.9 479.6 L695.6 479.7 L694.3 479.7 L693 479.7 L691.7 479.6 L690.4 479.6 L689.1 479.7 L687.8 479.7 L686.5 479.7 L685.2 479.7 L683.9 479.7 L682.6 479.7 L681.3 479.7 L680 479.7 L678.7 479.7 L677.4 479.7 L676.1 479.7 L674.8 479.7 L673.5 479.7 L672.2 479.7 L669.2 479.7 L666.2 479.7 L663.2 479.7 L660.2 479.8 L657.2 479.8 L654.2 479.8 L651.2 479.8 L648.2 479.8 L645.2 479.8 L642.2 480 L639.2 480.1 L636.2 480.1 L633.2 480.1 L630.2 480.1 L627.2 480.1 L624.2 480.1 L621.2 480.2 L618.2 480.2 L615.2 480.2 L612.2 480.2 L609.2 480.2 L606.2 480.2 L603.2 480.2 L600.2 480.2 L597.2 480.2 L594.2 480.2 L591.2 480.2 L588.2 480.2 L585.2 480.2 L582.2 480.2 L579.2 480.2 L576.2 480.2 L573.2 480.2 L570.2 480.2 L567.2 480.2 L564.2 480.2 L561.2 480.2 L558.2 480.2 L555.2 480.2 L552.2 480.2 L549.2 480.3 L546.2 480.3 L543.2 480.3 L540.2 480.3 L537.2 480.3 L534.2 480.3 L531.2 480.3 L528.2 480.3 L525.2 480.3 L522.2 480.3 L519.2 480.3 L516.2 480.3 L513.2 480.3 L510.2 480.3 L507.2 480.3 L504.2 480.3 L501.2 480.3 L498.2 480.3 L495.2 480.3 L492.2 480.3 L489.2 480.3 L486.2 480.3 L483.2 480.3 L480.2 480.3 L477.2 480.4 L474.2 480.4 L471.2 480.4 L468.2 480.6 L465.2 481 L462.2 481 L459.2 481 L456.2 481 L453.2 481 L450.2 481 L447.2 481 L444.2 481 L441.2 481 L438.2 481 L435.2 481 L432.2 481 L429.2 481 L426.2 481 L423.2 481 L420.2 481 L417.2 481 L414.2 481 L411.2 481 L408.2 481 L405.2 481 L402.2 481 L399.2 481 L396.2 481 L393.2 481 L390.2 481 L387.2 481 L384.2 481 L382.6 481 L381 481 L379.4 481 L377.8 481 L376.2 481 L374.6 481 L373 481 L371.4 481 L369.8 481 L368.2 481 L366.6 481 L365 481 L363.4 481 L361.8 481 L360.2 481 L358.6 481 L357 481 L355.4 481 L353.8 481 L352.2 481 L350.6 481 L349 481 L347.4 481 L345.8 481 L344.2 481 L342.6 481 L341 481 L339.4 481 L337.8 481 L336.2 481 L334.6 481 L333 481 L331.4 481 L329.8 481 L328.2 481 L326.6 481 L325 481 L323.4 481 L321.8 481 L320.2 481 L318.6 481 L317 481 L315.4 481 L313.8 481 L312.2 481 L310.6 481 L309 481 L307.4 481 L305.8 481 L304.2 481 L302.6 481 L301 481 L299.4 481 L297.8 481 L296.2 481 L294.6 481 L293 481 L291.4 481 L289.8 481 L288.2 481 L286.6 481 L285 481 L283.4 481 L281.8 481 L280.2 481 L278.6 481 L277 481 L275.4 481 L273.8 481 L272.2 481 L270.6 481 L269 481 L267.4 481 L265.8 481 L264.2 481 L262.6 481 L261 481 L259.4 481 L257.8 481 L256.2 481 L254.6 481 L253 481 L251.4 481 L249.8 481 L248.2 481 L246.6 481 L245 481 L243.4 481 L241.8 481 L240.2 481 L238.6 481 L237 481 L229 481 L221 481 L213 481 L205 481 L197 481 L189 481 L181 481 L173 481 L165 481 L157 481 L149 481 L141 481 L133 481 L125 481 L117 481 L109 481 L101 481 Z" fill="url(#gNUS)"/>
<path d="M301 481 L302.6 481 L304.2 481 L305.8 481 L307.4 481 L309 481 L310.6 481 L312.2 481 L313.8 481 L315.4 481 L317 481 L318.6 481 L320.2 481 L321.8 481 L323.4 481 L325 481 L326.6 481 L328.2 481 L329.8 481 L331.4 481 L333 481 L334.6 481 L336.2 481 L337.8 481 L339.4 481 L341 480.9 L342.6 480.9 L344.2 480.9 L345.8 480.9 L347.4 480.9 L349 480.9 L350.6 480.9 L352.2 480.9 L353.8 480.9 L355.4 480.9 L357 480.9 L358.6 480.9 L360.2 480.9 L361.8 480.9 L363.4 480.9 L365 480.9 L366.6 480.9 L368.2 480.9 L369.8 480.9 L371.4 480.9 L373 480.9 L374.6 480.9 L376.2 480.9 L377.8 480.9 L379.4 480.9 L381 480.8 L382.6 480.8 L384.2 480.8 L387.2 480.8 L390.2 480.8 L393.2 480.8 L396.2 480.8 L399.2 480.8 L402.2 480.8 L405.2 480.8 L408.2 480.8 L411.2 480.8 L414.2 480.8 L417.2 480.8 L420.2 480.8 L423.2 480.7 L426.2 480.7 L429.2 480.7 L432.2 480.7 L435.2 480.7 L438.2 480.7 L441.2 480.6 L444.2 480.6 L447.2 480.6 L450.2 480.6 L453.2 480.6 L456.2 480.6 L459.2 480.5 L462.2 480.5 L465.2 480.5 L468.2 480.2 L471.2 479.9 L474.2 479.9 L477.2 479.9 L480.2 479.8 L483.2 479.8 L486.2 479.8 L489.2 479.8 L492.2 479.8 L495.2 479.8 L498.2 479.8 L501.2 479.7 L504.2 479.7 L507.2 479.7 L510.2 479.7 L513.2 479.7 L516.2 479.7 L519.2 479.7 L522.2 479.7 L525.2 479.7 L528.2 479.7 L531.2 479.7 L534.2 479.6 L537.2 479.6 L540.2 479.6 L543.2 479.6 L546.2 479.6 L549.2 479.6 L552.2 479.6 L555.2 479.6 L558.2 479.6 L561.2 479.6 L564.2 479.6 L567.2 479.5 L570.2 479.5 L573.2 479.5 L576.2 479.5 L579.2 479.5 L582.2 479.5 L585.2 479.5 L588.2 479.5 L591.2 479.5 L594.2 479.4 L597.2 479.4 L600.2 479.4 L603.2 479.4 L606.2 479.3 L609.2 479.3 L612.2 479.3 L615.2 479.3 L618.2 479.3 L621.2 479.2 L624.2 479.2 L627.2 479.2 L630.2 479.2 L633.2 479.1 L636.2 479.1 L639.2 479.1 L642.2 478.9 L645.2 478.8 L648.2 478.7 L651.2 478.7 L654.2 478.7 L657.2 478.6 L660.2 478.6 L663.2 478.6 L666.2 478.6 L669.2 478.6 L672.2 478.5 L673.5 478.5 L674.8 478.5 L676.1 478.5 L677.4 478.5 L678.7 478.4 L680 478.4 L681.3 478.3 L682.6 478.3 L683.9 478.2 L685.2 478.2 L686.5 478.1 L687.8 478.1 L689.1 478.1 L690.4 478 L691.7 478 L693 477.9 L694.3 477.9 L695.6 477.8 L696.9 477.8 L698.2 477.7 L699.5 477.7 L700.8 477.6 L702.1 477.6 L703.4 477.6 L704.7 477.5 L706 477.5 L707.3 477.5 L708.6 477.4 L709.9 477.4 L711.2 477.3 L712.5 477.3 L713.8 477.2 L715.1 477.2 L716.4 477.2 L717.7 477.1 L719 477.1 L720.3 477.1 L721.6 477.1 L722.9 477 L724.2 477 L725.5 476.9 L726.8 476.9 L728.1 476.9 L729.4 476.9 L730.7 476.8 L732 476.8 L733.3 476.7 L734.6 476.7 L735.9 476.7 L736.5 476.6 L737.1 476.6 L737.7 476.6 L738.3 476.5 L738.9 476.5 L739.5 476.5 L740.1 476.4 L740.7 476.4 L741.3 476.4 L741.9 476.4 L742.5 476.3 L743.1 476.3 L743.7 476.2 L744.3 476.2 L744.9 476.2 L745.5 476.1 L746.1 476.1 L746.7 476.1 L747.3 476.1 L747.9 476 L748.5 475.8 L749.1 475.5 L749.7 475.1 L750.3 474.8 L750.9 474.5 L751.4 474.2" fill="none" stroke="#b0c4de" stroke-width="1.7" stroke-linejoin="round"/>
<path d="M101 481 L109 481 L117 481 L125 481 L133 481 L141 481 L149 481 L157 481 L165 481 L173 481 L181 481 L189 481 L197 481 L205 481 L213 481 L221 481 L229 481 L237 481 L238.6 481 L240.2 481 L241.8 481 L243.4 481 L245 481 L246.6 481 L248.2 481 L249.8 481 L251.4 481 L253 481 L254.6 481 L256.2 481 L257.8 481 L259.4 481 L261 481 L262.6 481 L264.2 481 L265.8 481 L267.4 481 L269 481 L270.6 481 L272.2 481 L273.8 481 L275.4 481 L277 481 L278.6 481 L280.2 481 L281.8 481 L283.4 481 L285 481 L286.6 481 L288.2 481 L289.8 481 L291.4 481 L293 481 L294.6 481 L296.2 481 L297.8 481 L299.4 481 L301 481 L302.6 481 L304.2 481 L305.8 481 L307.4 481 L309 481 L310.6 481 L312.2 481 L313.8 481 L315.4 481 L317 481 L318.6 481 L320.2 481 L321.8 481 L323.4 481 L325 481 L326.6 481 L328.2 481 L329.8 481 L331.4 481 L333 481 L334.6 481 L336.2 481 L337.8 481 L339.4 481 L341 480.9 L342.6 480.9 L344.2 480.9 L345.8 480.9 L347.4 480.9 L349 480.9 L350.6 480.9 L352.2 480.9 L353.8 480.9 L355.4 480.9 L357 480.9 L358.6 480.9 L360.2 480.9 L361.8 480.9 L363.4 480.9 L365 480.9 L366.6 480.9 L368.2 480.9 L369.8 480.9 L371.4 480.9 L373 480.9 L374.6 480.9 L376.2 480.9 L377.8 480.9 L379.4 480.9 L381 480.8 L382.6 480.8 L384.2 480.8 L387.2 480.8 L390.2 480.8 L393.2 480.8 L396.2 480.8 L399.2 480.8 L402.2 480.8 L405.2 480.8 L408.2 480.8 L411.2 480.8 L414.2 480.8 L417.2 480.8 L420.2 480.8 L423.2 480.7 L426.2 480.7 L429.2 480.7 L432.2 480.7 L435.2 480.7 L438.2 480.7 L441.2 480.6 L444.2 480.6 L447.2 480.6 L450.2 480.6 L453.2 480.6 L456.2 480.6 L459.2 480.5 L462.2 480.5 L465.2 480.5 L468.2 480.2 L471.2 479.9 L474.2 479.9 L477.2 479.9 L480.2 479.8 L483.2 479.8 L486.2 479.8 L489.2 479.8 L492.2 479.8 L495.2 479.8 L498.2 479.8 L501.2 479.7 L504.2 479.7 L507.2 479.7 L510.2 479.7 L513.2 479.7 L516.2 479.7 L519.2 479.7 L522.2 479.7 L525.2 479.7 L528.2 479.7 L531.2 479.7 L534.2 479.6 L537.2 479.6 L540.2 479.6 L543.2 479.6 L546.2 479.6 L549.2 479.6 L552.2 479.6 L555.2 479.6 L558.2 479.6 L561.2 479.6 L564.2 479.6 L567.2 479.5 L570.2 479.5 L573.2 479.5 L576.2 479.5 L579.2 479.5 L582.2 479.5 L585.2 479.5 L588.2 479.5 L591.2 479.5 L594.2 479.4 L597.2 479.4 L600.2 479.4 L603.2 479.4 L606.2 479.3 L609.2 479.3 L612.2 479.3 L615.2 479.3 L618.2 479.3 L621.2 479.2 L624.2 479.2 L627.2 479.2 L630.2 479.2 L633.2 479.1 L636.2 479.1 L639.2 479.1 L642.2 478.9 L645.2 478.8 L648.2 478.7 L651.2 478.7 L654.2 478.7 L657.2 478.6 L660.2 478.6 L663.2 478.6 L666.2 478.6 L669.2 478.6 L672.2 478.5 L673.5 478.5 L674.8 478.1 L676.1 477.4 L677.4 477 L678.7 476.9 L680 476.9 L681.3 476.8 L682.6 476.8 L683.9 476.7 L685.2 476.6 L686.5 476.4 L687.8 476.1 L689.1 476.1 L690.4 476.1 L691.7 476.2 L693 476.2 L694.3 476.1 L695.6 476.1 L696.9 476 L698.2 475.9 L699.5 475.9 L700.8 475.8 L702.1 475.8 L703.4 475.8 L704.7 475.8 L706 475.7 L707.3 475.7 L708.6 475.7 L709.9 475.6 L711.2 475.6 L712.5 475.5 L713.8 475.5 L715.1 475.4 L716.4 475.4 L717.7 475.4 L719 475.4 L720.3 475.3 L721.6 475.3 L722.9 475.2 L724.2 475.2 L725.5 475.2 L726.8 475.1 L728.1 475.1 L729.4 475 L730.7 475 L732 474.9 L733.3 474.9 L734.6 474.9 L735.9 474.8 L736.5 474.8 L737.1 474.7 L737.7 474.7 L738.3 474.6 L738.9 474.5 L739.5 474.5 L740.1 474.4 L740.7 474.4 L741.3 474.3 L741.9 474.3 L742.5 474.1 L743.1 474.1 L743.7 474 L744.3 474 L744.9 473.9 L745.5 473.8 L746.1 473.7 L746.7 473.7 L747.3 473.7 L747.9 473.5 L748.5 472.8 L749.1 471.8 L749.7 470.8 L750.3 469.8 L750.9 468.8 L751.4 468 L751.4 474.2 L750.9 474.5 L750.3 474.8 L749.7 475.1 L749.1 475.5 L748.5 475.8 L747.9 476 L747.3 476.1 L746.7 476.1 L746.1 476.1 L745.5 476.1 L744.9 476.2 L744.3 476.2 L743.7 476.2 L743.1 476.3 L742.5 476.3 L741.9 476.4 L741.3 476.4 L740.7 476.4 L740.1 476.4 L739.5 476.5 L738.9 476.5 L738.3 476.5 L737.7 476.6 L737.1 476.6 L736.5 476.6 L735.9 476.7 L734.6 476.7 L733.3 476.7 L732 476.8 L730.7 476.8 L729.4 476.9 L728.1 476.9 L726.8 476.9 L725.5 476.9 L724.2 477 L722.9 477 L721.6 477.1 L720.3 477.1 L719 477.1 L717.7 477.1 L716.4 477.2 L715.1 477.2 L713.8 477.2 L712.5 477.3 L711.2 477.3 L709.9 477.4 L708.6 477.4 L707.3 477.5 L706 477.5 L704.7 477.5 L703.4 477.6 L702.1 477.6 L700.8 477.6 L699.5 477.7 L698.2 477.7 L696.9 477.8 L695.6 477.8 L694.3 477.9 L693 477.9 L691.7 478 L690.4 478 L689.1 478.1 L687.8 478.1 L686.5 478.1 L685.2 478.2 L683.9 478.2 L682.6 478.3 L681.3 478.3 L680 478.4 L678.7 478.4 L677.4 478.5 L676.1 478.5 L674.8 478.5 L673.5 478.5 L672.2 478.5 L669.2 478.6 L666.2 478.6 L663.2 478.6 L660.2 478.6 L657.2 478.6 L654.2 478.7 L651.2 478.7 L648.2 478.7 L645.2 478.8 L642.2 478.9 L639.2 479.1 L636.2 479.1 L633.2 479.1 L630.2 479.2 L627.2 479.2 L624.2 479.2 L621.2 479.2 L618.2 479.3 L615.2 479.3 L612.2 479.3 L609.2 479.3 L606.2 479.3 L603.2 479.4 L600.2 479.4 L597.2 479.4 L594.2 479.4 L591.2 479.5 L588.2 479.5 L585.2 479.5 L582.2 479.5 L579.2 479.5 L576.2 479.5 L573.2 479.5 L570.2 479.5 L567.2 479.5 L564.2 479.6 L561.2 479.6 L558.2 479.6 L555.2 479.6 L552.2 479.6 L549.2 479.6 L546.2 479.6 L543.2 479.6 L540.2 479.6 L537.2 479.6 L534.2 479.6 L531.2 479.7 L528.2 479.7 L525.2 479.7 L522.2 479.7 L519.2 479.7 L516.2 479.7 L513.2 479.7 L510.2 479.7 L507.2 479.7 L504.2 479.7 L501.2 479.7 L498.2 479.8 L495.2 479.8 L492.2 479.8 L489.2 479.8 L486.2 479.8 L483.2 479.8 L480.2 479.8 L477.2 479.9 L474.2 479.9 L471.2 479.9 L468.2 480.2 L465.2 480.5 L462.2 480.5 L459.2 480.5 L456.2 480.6 L453.2 480.6 L450.2 480.6 L447.2 480.6 L444.2 480.6 L441.2 480.6 L438.2 480.7 L435.2 480.7 L432.2 480.7 L429.2 480.7 L426.2 480.7 L423.2 480.7 L420.2 480.8 L417.2 480.8 L414.2 480.8 L411.2 480.8 L408.2 480.8 L405.2 480.8 L402.2 480.8 L399.2 480.8 L396.2 480.8 L393.2 480.8 L390.2 480.8 L387.2 480.8 L384.2 480.8 L382.6 480.8 L381 480.8 L379.4 480.9 L377.8 480.9 L376.2 480.9 L374.6 480.9 L373 480.9 L371.4 480.9 L369.8 480.9 L368.2 480.9 L366.6 480.9 L365 480.9 L363.4 480.9 L361.8 480.9 L360.2 480.9 L358.6 480.9 L357 480.9 L355.4 480.9 L353.8 480.9 L352.2 480.9 L350.6 480.9 L349 480.9 L347.4 480.9 L345.8 480.9 L344.2 480.9 L342.6 480.9 L341 480.9 L339.4 481 L337.8 481 L336.2 481 L334.6 481 L333 481 L331.4 481 L329.8 481 L328.2 481 L326.6 481 L325 481 L323.4 481 L321.8 481 L320.2 481 L318.6 481 L317 481 L315.4 481 L313.8 481 L312.2 481 L310.6 481 L309 481 L307.4 481 L305.8 481 L304.2 481 L302.6 481 L301 481 L299.4 481 L297.8 481 L296.2 481 L294.6 481 L293 481 L291.4 481 L289.8 481 L288.2 481 L286.6 481 L285 481 L283.4 481 L281.8 481 L280.2 481 L278.6 481 L277 481 L275.4 481 L273.8 481 L272.2 481 L270.6 481 L269 481 L267.4 481 L265.8 481 L264.2 481 L262.6 481 L261 481 L259.4 481 L257.8 481 L256.2 481 L254.6 481 L253 481 L251.4 481 L249.8 481 L248.2 481 L246.6 481 L245 481 L243.4 481 L241.8 481 L240.2 481 L238.6 481 L237 481 L229 481 L221 481 L213 481 L205 481 L197 481 L189 481 L181 481 L173 481 L165 481 L157 481 L149 481 L141 481 L133 481 L125 481 L117 481 L109 481 L101 481 Z" fill="url(#gSTK)"/>
<path d="M674.8 478.1 L676.1 477.4 L677.4 477 L678.7 476.9 L680 476.9 L681.3 476.8 L682.6 476.8 L683.9 476.7 L685.2 476.6 L686.5 476.4 L687.8 476.1 L689.1 476.1 L690.4 476.1 L691.7 476.2 L693 476.2 L694.3 476.1 L695.6 476.1 L696.9 476 L698.2 475.9 L699.5 475.9 L700.8 475.8 L702.1 475.8 L703.4 475.8 L704.7 475.8 L706 475.7 L707.3 475.7 L708.6 475.7 L709.9 475.6 L711.2 475.6 L712.5 475.5 L713.8 475.5 L715.1 475.4 L716.4 475.4 L717.7 475.4 L719 475.4 L720.3 475.3 L721.6 475.3 L722.9 475.2 L724.2 475.2 L725.5 475.2 L726.8 475.1 L728.1 475.1 L729.4 475 L730.7 475 L732 474.9 L733.3 474.9 L734.6 474.9 L735.9 474.8 L736.5 474.8 L737.1 474.7 L737.7 474.7 L738.3 474.6 L738.9 474.5 L739.5 474.5 L740.1 474.4 L740.7 474.4 L741.3 474.3 L741.9 474.3 L742.5 474.1 L743.1 474.1 L743.7 474 L744.3 474 L744.9 473.9 L745.5 473.8 L746.1 473.7 L746.7 473.7 L747.3 473.7 L747.9 473.5 L748.5 472.8 L749.1 471.8 L749.7 470.8 L750.3 469.8 L750.9 468.8 L751.4 468" fill="none" stroke="#ff4500" stroke-width="1.7" stroke-linejoin="round"/>
<path d="M101 481 L109 481 L117 481 L125 481 L133 481 L141 481 L149 481 L157 481 L165 481 L173 481 L181 481 L189 481 L197 481 L205 481 L213 481 L221 481 L229 481 L237 481 L238.6 481 L240.2 481 L241.8 481 L243.4 481 L245 481 L246.6 481 L248.2 481 L249.8 481 L251.4 481 L253 481 L254.6 481 L256.2 481 L257.8 481 L259.4 481 L261 481 L262.6 481 L264.2 481 L265.8 481 L267.4 481 L269 481 L270.6 481 L272.2 481 L273.8 481 L275.4 481 L277 481 L278.6 481 L280.2 481 L281.8 481 L283.4 481 L285 481 L286.6 481 L288.2 481 L289.8 481 L291.4 481 L293 481 L294.6 481 L296.2 480.9 L297.8 480.9 L299.4 480.9 L301 480.9 L302.6 480.9 L304.2 480.9 L305.8 480.9 L307.4 480.9 L309 480.9 L310.6 480.9 L312.2 480.9 L313.8 480.9 L315.4 480.9 L317 480.9 L318.6 480.9 L320.2 480.9 L321.8 480.9 L323.4 480.9 L325 480.9 L326.6 480.9 L328.2 480.9 L329.8 480.9 L331.4 480.8 L333 480.8 L334.6 480.8 L336.2 480.8 L337.8 480.8 L339.4 480.8 L341 480.8 L342.6 480.8 L344.2 480.8 L345.8 480.8 L347.4 480.8 L349 480.8 L350.6 480.8 L352.2 480.8 L353.8 480.8 L355.4 480.8 L357 480.8 L358.6 480.8 L360.2 480.8 L361.8 480.8 L363.4 480.8 L365 480.8 L366.6 480.8 L368.2 480.7 L369.8 480.7 L371.4 480.7 L373 480.7 L374.6 480.7 L376.2 480.7 L377.8 480.7 L379.4 480.7 L381 480.7 L382.6 480.7 L384.2 480.7 L387.2 480.7 L390.2 480.7 L393.2 480.7 L396.2 480.7 L399.2 480.7 L402.2 480.6 L405.2 480.6 L408.2 480.6 L411.2 480.6 L414.2 480.6 L417.2 480.6 L420.2 480.6 L423.2 480.6 L426.2 480.6 L429.2 480.5 L432.2 480.5 L435.2 480.5 L438.2 480.5 L441.2 480.5 L444.2 480.5 L447.2 480.4 L450.2 480.4 L453.2 480.4 L456.2 480.4 L459.2 480.3 L462.2 480.3 L465.2 480.3 L468.2 480 L471.2 479.7 L474.2 479.7 L477.2 479.7 L480.2 479.6 L483.2 479.6 L486.2 479.6 L489.2 479.6 L492.2 479.6 L495.2 479.6 L498.2 479.6 L501.2 479.5 L504.2 479.5 L507.2 479.5 L510.2 479.5 L513.2 479.5 L516.2 479.5 L519.2 479.5 L522.2 479.5 L525.2 479.5 L528.2 479.5 L531.2 479.4 L534.2 479.4 L537.2 479.4 L540.2 479.4 L543.2 479.4 L546.2 479.4 L549.2 479.4 L552.2 479.4 L555.2 479.4 L558.2 479.3 L561.2 479.3 L564.2 479.3 L567.2 479.3 L570.2 479.3 L573.2 479.3 L576.2 479.3 L579.2 479.3 L582.2 479.3 L585.2 479.2 L588.2 479.2 L591.2 479.2 L594.2 479.2 L597.2 479.1 L600.2 479.1 L603.2 479.1 L606.2 479 L609.2 479 L612.2 479 L615.2 478.9 L618.2 478.9 L621.2 478.8 L624.2 478.8 L627.2 478.7 L630.2 478.7 L633.2 478.7 L636.2 478.6 L639.2 478.6 L642.2 478.4 L645.2 478.1 L648.2 478 L651.2 477.9 L654.2 477.8 L657.2 477.7 L660.2 477.6 L663.2 477.5 L666.2 477.4 L669.2 477.3 L672.2 477.2 L673.5 477.2 L674.8 476.7 L676.1 476 L677.4 475.4 L678.7 475.2 L680 474.9 L681.3 474.7 L682.6 474.5 L683.9 474.2 L685.2 473.9 L686.5 473.5 L687.8 473 L689.1 472.8 L690.4 472.6 L691.7 472.5 L693 472.3 L694.3 472 L695.6 471.8 L696.9 471.5 L698.2 471.3 L699.5 471.1 L700.8 470.8 L702.1 470.6 L703.4 470.3 L704.7 470.2 L706 469.8 L707.3 469.6 L708.6 469.5 L709.9 469.2 L711.2 468.9 L712.5 468.7 L713.8 468.4 L715.1 468.3 L716.4 468.1 L717.7 467.7 L719 467.6 L720.3 467.2 L721.6 467.1 L722.9 466.9 L724.2 466.6 L725.5 466.4 L726.8 466.1 L728.1 465.8 L729.4 465.7 L730.7 465.4 L732 465.2 L733.3 464.8 L734.6 464.8 L735.9 464.6 L736.5 464.4 L737.1 464.2 L737.7 464 L738.3 463.9 L738.9 463.9 L739.5 463.8 L740.1 463.7 L740.7 463.8 L741.3 463.7 L741.9 463.5 L742.5 463.4 L743.1 463.5 L743.7 463.3 L744.3 463.3 L744.9 463.2 L745.5 463.1 L746.1 463.1 L746.7 463.1 L747.3 462.9 L747.9 462.8 L748.5 461.7 L749.1 460.7 L749.7 459.3 L750.3 458.3 L750.9 457.1 L751.4 456.1 L751.4 468 L750.9 468.8 L750.3 469.8 L749.7 470.8 L749.1 471.8 L748.5 472.8 L747.9 473.5 L747.3 473.7 L746.7 473.7 L746.1 473.7 L745.5 473.8 L744.9 473.9 L744.3 474 L743.7 474 L743.1 474.1 L742.5 474.1 L741.9 474.3 L741.3 474.3 L740.7 474.4 L740.1 474.4 L739.5 474.5 L738.9 474.5 L738.3 474.6 L737.7 474.7 L737.1 474.7 L736.5 474.8 L735.9 474.8 L734.6 474.9 L733.3 474.9 L732 474.9 L730.7 475 L729.4 475 L728.1 475.1 L726.8 475.1 L725.5 475.2 L724.2 475.2 L722.9 475.2 L721.6 475.3 L720.3 475.3 L719 475.4 L717.7 475.4 L716.4 475.4 L715.1 475.4 L713.8 475.5 L712.5 475.5 L711.2 475.6 L709.9 475.6 L708.6 475.7 L707.3 475.7 L706 475.7 L704.7 475.8 L703.4 475.8 L702.1 475.8 L700.8 475.8 L699.5 475.9 L698.2 475.9 L696.9 476 L695.6 476.1 L694.3 476.1 L693 476.2 L691.7 476.2 L690.4 476.1 L689.1 476.1 L687.8 476.1 L686.5 476.4 L685.2 476.6 L683.9 476.7 L682.6 476.8 L681.3 476.8 L680 476.9 L678.7 476.9 L677.4 477 L676.1 477.4 L674.8 478.1 L673.5 478.5 L672.2 478.5 L669.2 478.6 L666.2 478.6 L663.2 478.6 L660.2 478.6 L657.2 478.6 L654.2 478.7 L651.2 478.7 L648.2 478.7 L645.2 478.8 L642.2 478.9 L639.2 479.1 L636.2 479.1 L633.2 479.1 L630.2 479.2 L627.2 479.2 L624.2 479.2 L621.2 479.2 L618.2 479.3 L615.2 479.3 L612.2 479.3 L609.2 479.3 L606.2 479.3 L603.2 479.4 L600.2 479.4 L597.2 479.4 L594.2 479.4 L591.2 479.5 L588.2 479.5 L585.2 479.5 L582.2 479.5 L579.2 479.5 L576.2 479.5 L573.2 479.5 L570.2 479.5 L567.2 479.5 L564.2 479.6 L561.2 479.6 L558.2 479.6 L555.2 479.6 L552.2 479.6 L549.2 479.6 L546.2 479.6 L543.2 479.6 L540.2 479.6 L537.2 479.6 L534.2 479.6 L531.2 479.7 L528.2 479.7 L525.2 479.7 L522.2 479.7 L519.2 479.7 L516.2 479.7 L513.2 479.7 L510.2 479.7 L507.2 479.7 L504.2 479.7 L501.2 479.7 L498.2 479.8 L495.2 479.8 L492.2 479.8 L489.2 479.8 L486.2 479.8 L483.2 479.8 L480.2 479.8 L477.2 479.9 L474.2 479.9 L471.2 479.9 L468.2 480.2 L465.2 480.5 L462.2 480.5 L459.2 480.5 L456.2 480.6 L453.2 480.6 L450.2 480.6 L447.2 480.6 L444.2 480.6 L441.2 480.6 L438.2 480.7 L435.2 480.7 L432.2 480.7 L429.2 480.7 L426.2 480.7 L423.2 480.7 L420.2 480.8 L417.2 480.8 L414.2 480.8 L411.2 480.8 L408.2 480.8 L405.2 480.8 L402.2 480.8 L399.2 480.8 L396.2 480.8 L393.2 480.8 L390.2 480.8 L387.2 480.8 L384.2 480.8 L382.6 480.8 L381 480.8 L379.4 480.9 L377.8 480.9 L376.2 480.9 L374.6 480.9 L373 480.9 L371.4 480.9 L369.8 480.9 L368.2 480.9 L366.6 480.9 L365 480.9 L363.4 480.9 L361.8 480.9 L360.2 480.9 L358.6 480.9 L357 480.9 L355.4 480.9 L353.8 480.9 L352.2 480.9 L350.6 480.9 L349 480.9 L347.4 480.9 L345.8 480.9 L344.2 480.9 L342.6 480.9 L341 480.9 L339.4 481 L337.8 481 L336.2 481 L334.6 481 L333 481 L331.4 481 L329.8 481 L328.2 481 L326.6 481 L325 481 L323.4 481 L321.8 481 L320.2 481 L318.6 481 L317 481 L315.4 481 L313.8 481 L312.2 481 L310.6 481 L309 481 L307.4 481 L305.8 481 L304.2 481 L302.6 481 L301 481 L299.4 481 L297.8 481 L296.2 481 L294.6 481 L293 481 L291.4 481 L289.8 481 L288.2 481 L286.6 481 L285 481 L283.4 481 L281.8 481 L280.2 481 L278.6 481 L277 481 L275.4 481 L273.8 481 L272.2 481 L270.6 481 L269 481 L267.4 481 L265.8 481 L264.2 481 L262.6 481 L261 481 L259.4 481 L257.8 481 L256.2 481 L254.6 481 L253 481 L251.4 481 L249.8 481 L248.2 481 L246.6 481 L245 481 L243.4 481 L241.8 481 L240.2 481 L238.6 481 L237 481 L229 481 L221 481 L213 481 L205 481 L197 481 L189 481 L181 481 L173 481 L165 481 L157 481 L149 481 L141 481 L133 481 L125 481 L117 481 L109 481 L101 481 Z" fill="url(#gINST)"/>
<path d="M293 481 L294.6 481 L296.2 480.9 L297.8 480.9 L299.4 480.9 L301 480.9 L302.6 480.9 L304.2 480.9 L305.8 480.9 L307.4 480.9 L309 480.9 L310.6 480.9 L312.2 480.9 L313.8 480.9 L315.4 480.9 L317 480.9 L318.6 480.9 L320.2 480.9 L321.8 480.9 L323.4 480.9 L325 480.9 L326.6 480.9 L328.2 480.9 L329.8 480.9 L331.4 480.8 L333 480.8 L334.6 480.8 L336.2 480.8 L337.8 480.8 L339.4 480.8 L341 480.8 L342.6 480.8 L344.2 480.8 L345.8 480.8 L347.4 480.8 L349 480.8 L350.6 480.8 L352.2 480.8 L353.8 480.8 L355.4 480.8 L357 480.8 L358.6 480.8 L360.2 480.8 L361.8 480.8 L363.4 480.8 L365 480.8 L366.6 480.8 L368.2 480.7 L369.8 480.7 L371.4 480.7 L373 480.7 L374.6 480.7 L376.2 480.7 L377.8 480.7 L379.4 480.7 L381 480.7 L382.6 480.7 L384.2 480.7 L387.2 480.7 L390.2 480.7 L393.2 480.7 L396.2 480.7 L399.2 480.7 L402.2 480.6 L405.2 480.6 L408.2 480.6 L411.2 480.6 L414.2 480.6 L417.2 480.6 L420.2 480.6 L423.2 480.6 L426.2 480.6 L429.2 480.5 L432.2 480.5 L435.2 480.5 L438.2 480.5 L441.2 480.5 L444.2 480.5 L447.2 480.4 L450.2 480.4 L453.2 480.4 L456.2 480.4 L459.2 480.3 L462.2 480.3 L465.2 480.3 L468.2 480 L471.2 479.7 L474.2 479.7 L477.2 479.7 L480.2 479.6 L483.2 479.6 L486.2 479.6 L489.2 479.6 L492.2 479.6 L495.2 479.6 L498.2 479.6 L501.2 479.5 L504.2 479.5 L507.2 479.5 L510.2 479.5 L513.2 479.5 L516.2 479.5 L519.2 479.5 L522.2 479.5 L525.2 479.5 L528.2 479.5 L531.2 479.4 L534.2 479.4 L537.2 479.4 L540.2 479.4 L543.2 479.4 L546.2 479.4 L549.2 479.4 L552.2 479.4 L555.2 479.4 L558.2 479.3 L561.2 479.3 L564.2 479.3 L567.2 479.3 L570.2 479.3 L573.2 479.3 L576.2 479.3 L579.2 479.3 L582.2 479.3 L585.2 479.2 L588.2 479.2 L591.2 479.2 L594.2 479.2 L597.2 479.1 L600.2 479.1 L603.2 479.1 L606.2 479 L609.2 479 L612.2 479 L615.2 478.9 L618.2 478.9 L621.2 478.8 L624.2 478.8 L627.2 478.7 L630.2 478.7 L633.2 478.7 L636.2 478.6 L639.2 478.6 L642.2 478.4 L645.2 478.1 L648.2 478 L651.2 477.9 L654.2 477.8 L657.2 477.7 L660.2 477.6 L663.2 477.5 L666.2 477.4 L669.2 477.3 L672.2 477.2 L673.5 477.2 L674.8 476.7 L676.1 476 L677.4 475.4 L678.7 475.2 L680 474.9 L681.3 474.7 L682.6 474.5 L683.9 474.2 L685.2 473.9 L686.5 473.5 L687.8 473 L689.1 472.8 L690.4 472.6 L691.7 472.5 L693 472.3 L694.3 472 L695.6 471.8 L696.9 471.5 L698.2 471.3 L699.5 471.1 L700.8 470.8 L702.1 470.6 L703.4 470.3 L704.7 470.2 L706 469.8 L707.3 469.6 L708.6 469.5 L709.9 469.2 L711.2 468.9 L712.5 468.7 L713.8 468.4 L715.1 468.3 L716.4 468.1 L717.7 467.7 L719 467.6 L720.3 467.2 L721.6 467.1 L722.9 466.9 L724.2 466.6 L725.5 466.4 L726.8 466.1 L728.1 465.8 L729.4 465.7 L730.7 465.4 L732 465.2 L733.3 464.8 L734.6 464.8 L735.9 464.6 L736.5 464.4 L737.1 464.2 L737.7 464 L738.3 463.9 L738.9 463.9 L739.5 463.8 L740.1 463.7 L740.7 463.8 L741.3 463.7 L741.9 463.5 L742.5 463.4 L743.1 463.5 L743.7 463.3 L744.3 463.3 L744.9 463.2 L745.5 463.1 L746.1 463.1 L746.7 463.1 L747.3 462.9 L747.9 462.8 L748.5 461.7 L749.1 460.7 L749.7 459.3 L750.3 458.3 L750.9 457.1 L751.4 456.1" fill="none" stroke="#8ed9ec" stroke-width="1.4" stroke-linejoin="round"/>
<path d="M101 481 L109 481 L117 481 L125 481 L133 481 L141 481 L149 481 L157 481 L165 481 L173 481 L181 481 L189 481 L197 481 L205 481 L213 481 L221 481 L229 481 L237 481 L238.6 481 L240.2 481 L241.8 481 L243.4 481 L245 481 L246.6 481 L248.2 481 L249.8 481 L251.4 481 L253 481 L254.6 481 L256.2 481 L257.8 481 L259.4 481 L261 481 L262.6 481 L264.2 481 L265.8 481 L267.4 481 L269 481 L270.6 481 L272.2 481 L273.8 481 L275.4 481 L277 481 L278.6 481 L280.2 481 L281.8 481 L283.4 481 L285 481 L286.6 481 L288.2 481 L289.8 481 L291.4 480.9 L293 480.9 L294.6 480.9 L296.2 480.8 L297.8 480.8 L299.4 480.8 L301 480.7 L302.6 480.7 L304.2 480.7 L305.8 480.7 L307.4 480.6 L309 480.6 L310.6 480.6 L312.2 480.6 L313.8 480.6 L315.4 480.5 L317 480.5 L318.6 480.5 L320.2 480.5 L321.8 480.4 L323.4 480.4 L325 480.4 L326.6 480.4 L328.2 480.3 L329.8 480.3 L331.4 480.3 L333 480.3 L334.6 480.3 L336.2 480.1 L337.8 479.9 L339.4 479.7 L341 479.6 L342.6 479.5 L344.2 479.4 L345.8 479.3 L347.4 479.2 L349 479.1 L350.6 479 L352.2 479 L353.8 478.9 L355.4 478.8 L357 478.7 L358.6 478.6 L360.2 478.6 L361.8 478.5 L363.4 478.4 L365 478.4 L366.6 478.3 L368.2 478.3 L369.8 478.1 L371.4 478.1 L373 478 L374.6 478 L376.2 477.9 L377.8 477.9 L379.4 477.8 L381 477.8 L382.6 477.7 L384.2 477.7 L387.2 477.7 L390.2 477 L393.2 476 L396.2 476 L399.2 476 L402.2 476 L405.2 476 L408.2 475.9 L411.2 475.9 L414.2 475.8 L417.2 475.9 L420.2 475.9 L423.2 475.9 L426.2 475.9 L429.2 475.8 L432.2 475.8 L435.2 475.9 L438.2 475.8 L441.2 475.8 L444.2 475.8 L447.2 475.7 L450.2 475.7 L453.2 475.7 L456.2 475.8 L459.2 475.7 L462.2 475.7 L465.2 475.7 L468.2 475.4 L471.2 475.1 L474.2 475.1 L477.2 475.1 L480.2 475.1 L483.2 475.1 L486.2 475 L489.2 475 L492.2 475.1 L495.2 475 L498.2 475 L501.2 475 L504.2 475 L507.2 475 L510.2 475 L513.2 474.9 L516.2 475 L519.2 475 L522.2 474.9 L525.2 474.9 L528.2 474.9 L531.2 475 L534.2 474.9 L537.2 475 L540.2 475 L543.2 474.9 L546.2 474.9 L549.2 474.8 L552.2 474.9 L555.2 474.8 L558.2 474.9 L561.2 474.9 L564.2 474.8 L567.2 474.8 L570.2 474.9 L573.2 474.8 L576.2 474.8 L579.2 474.9 L582.2 474.8 L585.2 474.8 L588.2 474.8 L591.2 474.8 L594.2 474.7 L597.2 474.7 L600.2 474.7 L603.2 474.7 L606.2 474.7 L609.2 474.6 L612.2 474.6 L615.2 474.6 L618.2 474.6 L621.2 474.5 L624.2 474.5 L627.2 474.5 L630.2 474.4 L633.2 474.4 L636.2 474.3 L639.2 474.3 L642.2 474.2 L645.2 473.9 L648.2 473.7 L651.2 473.7 L654.2 473.6 L657.2 473.5 L660.2 473.3 L663.2 473.3 L666.2 473.2 L669.2 473.1 L672.2 473 L673.5 472.9 L674.8 472.5 L676.1 471.8 L677.4 471.2 L678.7 470.8 L680 470.5 L681.3 470.2 L682.6 469.8 L683.9 469.5 L685.2 469.1 L686.5 468.6 L687.8 468 L689.1 467.7 L690.4 467.5 L691.7 467.2 L693 466.9 L694.3 466.5 L695.6 466.2 L696.9 465.9 L698.2 465.5 L699.5 465.2 L700.8 464.9 L702.1 464.6 L703.4 464.3 L704.7 464 L706 463.5 L707.3 463.4 L708.6 463.1 L709.9 462.7 L711.2 462.3 L712.5 462.2 L713.8 461.8 L715.1 461.4 L716.4 461.1 L717.7 460.8 L719 460.7 L720.3 460.1 L721.6 460 L722.9 459.6 L724.2 459.3 L725.5 459 L726.8 458.7 L728.1 458.2 L729.4 458.2 L730.7 457.8 L732 457.4 L733.3 456.9 L734.6 457 L735.9 456.7 L736.5 456.4 L737.1 456.2 L737.7 456 L738.3 455.9 L738.9 455.8 L739.5 455.6 L740.1 455.4 L740.7 455.6 L741.3 455.4 L741.9 455.2 L742.5 455.1 L743.1 455.1 L743.7 455 L744.3 454.8 L744.9 454.8 L745.5 454.6 L746.1 454.6 L746.7 454.6 L747.3 454.3 L747.9 454.2 L748.5 452.6 L749.1 451 L749.7 449 L750.3 447.5 L750.9 445.5 L751.4 444 L751.4 456.1 L750.9 457.1 L750.3 458.3 L749.7 459.3 L749.1 460.7 L748.5 461.7 L747.9 462.8 L747.3 462.9 L746.7 463.1 L746.1 463.1 L745.5 463.1 L744.9 463.2 L744.3 463.3 L743.7 463.3 L743.1 463.5 L742.5 463.4 L741.9 463.5 L741.3 463.7 L740.7 463.8 L740.1 463.7 L739.5 463.8 L738.9 463.9 L738.3 463.9 L737.7 464 L737.1 464.2 L736.5 464.4 L735.9 464.6 L734.6 464.8 L733.3 464.8 L732 465.2 L730.7 465.4 L729.4 465.7 L728.1 465.8 L726.8 466.1 L725.5 466.4 L724.2 466.6 L722.9 466.9 L721.6 467.1 L720.3 467.2 L719 467.6 L717.7 467.7 L716.4 468.1 L715.1 468.3 L713.8 468.4 L712.5 468.7 L711.2 468.9 L709.9 469.2 L708.6 469.5 L707.3 469.6 L706 469.8 L704.7 470.2 L703.4 470.3 L702.1 470.6 L700.8 470.8 L699.5 471.1 L698.2 471.3 L696.9 471.5 L695.6 471.8 L694.3 472 L693 472.3 L691.7 472.5 L690.4 472.6 L689.1 472.8 L687.8 473 L686.5 473.5 L685.2 473.9 L683.9 474.2 L682.6 474.5 L681.3 474.7 L680 474.9 L678.7 475.2 L677.4 475.4 L676.1 476 L674.8 476.7 L673.5 477.2 L672.2 477.2 L669.2 477.3 L666.2 477.4 L663.2 477.5 L660.2 477.6 L657.2 477.7 L654.2 477.8 L651.2 477.9 L648.2 478 L645.2 478.1 L642.2 478.4 L639.2 478.6 L636.2 478.6 L633.2 478.7 L630.2 478.7 L627.2 478.7 L624.2 478.8 L621.2 478.8 L618.2 478.9 L615.2 478.9 L612.2 479 L609.2 479 L606.2 479 L603.2 479.1 L600.2 479.1 L597.2 479.1 L594.2 479.2 L591.2 479.2 L588.2 479.2 L585.2 479.2 L582.2 479.3 L579.2 479.3 L576.2 479.3 L573.2 479.3 L570.2 479.3 L567.2 479.3 L564.2 479.3 L561.2 479.3 L558.2 479.3 L555.2 479.4 L552.2 479.4 L549.2 479.4 L546.2 479.4 L543.2 479.4 L540.2 479.4 L537.2 479.4 L534.2 479.4 L531.2 479.4 L528.2 479.5 L525.2 479.5 L522.2 479.5 L519.2 479.5 L516.2 479.5 L513.2 479.5 L510.2 479.5 L507.2 479.5 L504.2 479.5 L501.2 479.5 L498.2 479.6 L495.2 479.6 L492.2 479.6 L489.2 479.6 L486.2 479.6 L483.2 479.6 L480.2 479.6 L477.2 479.7 L474.2 479.7 L471.2 479.7 L468.2 480 L465.2 480.3 L462.2 480.3 L459.2 480.3 L456.2 480.4 L453.2 480.4 L450.2 480.4 L447.2 480.4 L444.2 480.5 L441.2 480.5 L438.2 480.5 L435.2 480.5 L432.2 480.5 L429.2 480.5 L426.2 480.6 L423.2 480.6 L420.2 480.6 L417.2 480.6 L414.2 480.6 L411.2 480.6 L408.2 480.6 L405.2 480.6 L402.2 480.6 L399.2 480.7 L396.2 480.7 L393.2 480.7 L390.2 480.7 L387.2 480.7 L384.2 480.7 L382.6 480.7 L381 480.7 L379.4 480.7 L377.8 480.7 L376.2 480.7 L374.6 480.7 L373 480.7 L371.4 480.7 L369.8 480.7 L368.2 480.7 L366.6 480.8 L365 480.8 L363.4 480.8 L361.8 480.8 L360.2 480.8 L358.6 480.8 L357 480.8 L355.4 480.8 L353.8 480.8 L352.2 480.8 L350.6 480.8 L349 480.8 L347.4 480.8 L345.8 480.8 L344.2 480.8 L342.6 480.8 L341 480.8 L339.4 480.8 L337.8 480.8 L336.2 480.8 L334.6 480.8 L333 480.8 L331.4 480.8 L329.8 480.9 L328.2 480.9 L326.6 480.9 L325 480.9 L323.4 480.9 L321.8 480.9 L320.2 480.9 L318.6 480.9 L317 480.9 L315.4 480.9 L313.8 480.9 L312.2 480.9 L310.6 480.9 L309 480.9 L307.4 480.9 L305.8 480.9 L304.2 480.9 L302.6 480.9 L301 480.9 L299.4 480.9 L297.8 480.9 L296.2 480.9 L294.6 481 L293 481 L291.4 481 L289.8 481 L288.2 481 L286.6 481 L285 481 L283.4 481 L281.8 481 L280.2 481 L278.6 481 L277 481 L275.4 481 L273.8 481 L272.2 481 L270.6 481 L269 481 L267.4 481 L265.8 481 L264.2 481 L262.6 481 L261 481 L259.4 481 L257.8 481 L256.2 481 L254.6 481 L253 481 L251.4 481 L249.8 481 L248.2 481 L246.6 481 L245 481 L243.4 481 L241.8 481 L240.2 481 L238.6 481 L237 481 L229 481 L221 481 L213 481 L205 481 L197 481 L189 481 L181 481 L173 481 L165 481 L157 481 L149 481 L141 481 L133 481 L125 481 L117 481 L109 481 L101 481 Z" fill="url(#gCOM)"/>
<path d="M285 481 L286.6 481 L288.2 481 L289.8 481 L291.4 480.9 L293 480.9 L294.6 480.9 L296.2 480.8 L297.8 480.8 L299.4 480.8 L301 480.7 L302.6 480.7 L304.2 480.7 L305.8 480.7 L307.4 480.6 L309 480.6 L310.6 480.6 L312.2 480.6 L313.8 480.6 L315.4 480.5 L317 480.5 L318.6 480.5 L320.2 480.5 L321.8 480.4 L323.4 480.4 L325 480.4 L326.6 480.4 L328.2 480.3 L329.8 480.3 L331.4 480.3 L333 480.3 L334.6 480.3 L336.2 480.1 L337.8 479.9 L339.4 479.7 L341 479.6 L342.6 479.5 L344.2 479.4 L345.8 479.3 L347.4 479.2 L349 479.1 L350.6 479 L352.2 479 L353.8 478.9 L355.4 478.8 L357 478.7 L358.6 478.6 L360.2 478.6 L361.8 478.5 L363.4 478.4 L365 478.4 L366.6 478.3 L368.2 478.3 L369.8 478.1 L371.4 478.1 L373 478 L374.6 478 L376.2 477.9 L377.8 477.9 L379.4 477.8 L381 477.8 L382.6 477.7 L384.2 477.7 L387.2 477.7 L390.2 477 L393.2 476 L396.2 476 L399.2 476 L402.2 476 L405.2 476 L408.2 475.9 L411.2 475.9 L414.2 475.8 L417.2 475.9 L420.2 475.9 L423.2 475.9 L426.2 475.9 L429.2 475.8 L432.2 475.8 L435.2 475.9 L438.2 475.8 L441.2 475.8 L444.2 475.8 L447.2 475.7 L450.2 475.7 L453.2 475.7 L456.2 475.8 L459.2 475.7 L462.2 475.7 L465.2 475.7 L468.2 475.4 L471.2 475.1 L474.2 475.1 L477.2 475.1 L480.2 475.1 L483.2 475.1 L486.2 475 L489.2 475 L492.2 475.1 L495.2 475 L498.2 475 L501.2 475 L504.2 475 L507.2 475 L510.2 475 L513.2 474.9 L516.2 475 L519.2 475 L522.2 474.9 L525.2 474.9 L528.2 474.9 L531.2 475 L534.2 474.9 L537.2 475 L540.2 475 L543.2 474.9 L546.2 474.9 L549.2 474.8 L552.2 474.9 L555.2 474.8 L558.2 474.9 L561.2 474.9 L564.2 474.8 L567.2 474.8 L570.2 474.9 L573.2 474.8 L576.2 474.8 L579.2 474.9 L582.2 474.8 L585.2 474.8 L588.2 474.8 L591.2 474.8 L594.2 474.7 L597.2 474.7 L600.2 474.7 L603.2 474.7 L606.2 474.7 L609.2 474.6 L612.2 474.6 L615.2 474.6 L618.2 474.6 L621.2 474.5 L624.2 474.5 L627.2 474.5 L630.2 474.4 L633.2 474.4 L636.2 474.3 L639.2 474.3 L642.2 474.2 L645.2 473.9 L648.2 473.7 L651.2 473.7 L654.2 473.6 L657.2 473.5 L660.2 473.3 L663.2 473.3 L666.2 473.2 L669.2 473.1 L672.2 473 L673.5 472.9 L674.8 472.5 L676.1 471.8 L677.4 471.2 L678.7 470.8 L680 470.5 L681.3 470.2 L682.6 469.8 L683.9 469.5 L685.2 469.1 L686.5 468.6 L687.8 468 L689.1 467.7 L690.4 467.5 L691.7 467.2 L693 466.9 L694.3 466.5 L695.6 466.2 L696.9 465.9 L698.2 465.5 L699.5 465.2 L700.8 464.9 L702.1 464.6 L703.4 464.3 L704.7 464 L706 463.5 L707.3 463.4 L708.6 463.1 L709.9 462.7 L711.2 462.3 L712.5 462.2 L713.8 461.8 L715.1 461.4 L716.4 461.1 L717.7 460.8 L719 460.7 L720.3 460.1 L721.6 460 L722.9 459.6 L724.2 459.3 L725.5 459 L726.8 458.7 L728.1 458.2 L729.4 458.2 L730.7 457.8 L732 457.4 L733.3 456.9 L734.6 457 L735.9 456.7 L736.5 456.4 L737.1 456.2 L737.7 456 L738.3 455.9 L738.9 455.8 L739.5 455.6 L740.1 455.4 L740.7 455.6 L741.3 455.4 L741.9 455.2 L742.5 455.1 L743.1 455.1 L743.7 455 L744.3 454.8 L744.9 454.8 L745.5 454.6 L746.1 454.6 L746.7 454.6 L747.3 454.3 L747.9 454.2 L748.5 452.6 L749.1 451 L749.7 449 L750.3 447.5 L750.9 445.5 L751.4 444" fill="none" stroke="#dc9e3a" stroke-width="1.7" stroke-linejoin="round"/>
<path d="M101 481 L109 481 L117 481 L125 481 L133 481 L141 481 L149 481 L157 481 L165 481 L173 481 L181 481 L189 481 L197 481 L205 481 L213 481 L221 481 L229 481 L237 481 L238.6 481 L240.2 481 L241.8 481 L243.4 481 L245 481 L246.6 481 L248.2 481 L249.8 481 L251.4 481 L253 481 L254.6 481 L256.2 481 L257.8 481 L259.4 481 L261 481 L262.6 481 L264.2 481 L265.8 481 L267.4 481 L269 481 L270.6 481 L272.2 481 L273.8 481 L275.4 481 L277 481 L278.6 481 L280.2 481 L281.8 481 L283.4 481 L285 481 L286.6 481 L288.2 481 L289.8 481 L291.4 480.9 L293 480.9 L294.6 480.9 L296.2 480.8 L297.8 480.8 L299.4 480.8 L301 480.7 L302.6 480.7 L304.2 480.7 L305.8 480.7 L307.4 480.6 L309 480.6 L310.6 480.6 L312.2 480.6 L313.8 480.6 L315.4 480.5 L317 480.5 L318.6 480.5 L320.2 480.5 L321.8 480.4 L323.4 480.4 L325 480.4 L326.6 480.4 L328.2 480.3 L329.8 480.3 L331.4 480.3 L333 480.3 L334.6 480.3 L336.2 480.1 L337.8 479.9 L339.4 479.7 L341 479.6 L342.6 479.5 L344.2 479.4 L345.8 479.3 L347.4 479.2 L349 479.1 L350.6 479 L352.2 479 L353.8 478.9 L355.4 478.8 L357 478.7 L358.6 478.6 L360.2 478.6 L361.8 478.5 L363.4 478.4 L365 478.4 L366.6 478.3 L368.2 478.3 L369.8 478.1 L371.4 478.1 L373 478 L374.6 478 L376.2 477.9 L377.8 477.9 L379.4 477.8 L381 477.8 L382.6 477.7 L384.2 477.7 L387.2 477.7 L390.2 477 L393.2 476 L396.2 476 L399.2 476 L402.2 476 L405.2 476 L408.2 475.9 L411.2 475.9 L414.2 475.8 L417.2 475.9 L420.2 475.9 L423.2 475.9 L426.2 475.9 L429.2 475.8 L432.2 475.8 L435.2 475.9 L438.2 475.8 L441.2 475.8 L444.2 475.8 L447.2 475.7 L450.2 475.7 L453.2 475.7 L456.2 475.8 L459.2 475.7 L462.2 475.7 L465.2 475.7 L468.2 475.4 L471.2 475.1 L474.2 475.1 L477.2 475.1 L480.2 475.1 L483.2 475.1 L486.2 475 L489.2 475 L492.2 475.1 L495.2 475 L498.2 472.3 L501.2 470.6 L504.2 470.6 L507.2 470.5 L510.2 470.5 L513.2 470.4 L516.2 470.5 L519.2 470.4 L522.2 470.4 L525.2 470.4 L528.2 470.3 L531.2 470.4 L534.2 470.3 L537.2 470.3 L540.2 470.4 L543.2 470.2 L546.2 470.3 L549.2 470.1 L552.2 470.2 L555.2 470.1 L558.2 470.2 L561.2 470.1 L564.2 470.1 L567.2 470 L570.2 470.1 L573.2 470 L576.2 469.9 L579.2 470 L582.2 469.9 L585.2 470 L588.2 469.9 L591.2 469.8 L594.2 469.4 L597.2 469.2 L600.2 469.1 L603.2 468.7 L606.2 468.4 L609.2 468.2 L612.2 468 L615.2 467.6 L618.2 467.5 L621.2 467 L624.2 466.9 L627.2 466.6 L630.2 466.4 L633.2 466.1 L636.2 465.7 L639.2 465.6 L642.2 464.9 L645.2 463.9 L648.2 463.1 L651.2 462.4 L654.2 461.6 L657.2 460.9 L660.2 459.8 L663.2 459.1 L666.2 458.2 L669.2 457.8 L672.2 456.7 L673.5 456.7 L674.8 455.7 L676.1 454.7 L677.4 454 L678.7 452.9 L680 452.3 L681.3 451.6 L682.6 450.6 L683.9 450.3 L685.2 449 L686.5 448.3 L687.8 447.4 L689.1 446.5 L690.4 446.1 L691.7 445.1 L693 444.5 L694.3 443.8 L695.6 442.8 L696.9 442.3 L698.2 441.7 L699.5 440.7 L700.8 440.2 L702.1 439.1 L703.4 438.6 L704.7 437.7 L706 436.5 L707.3 436.1 L708.6 435.3 L709.9 434.7 L711.2 434 L712.5 433.5 L713.8 432.5 L715.1 431.4 L716.4 430.8 L717.7 429.9 L719 429.1 L720.3 428.6 L721.6 428 L722.9 426.8 L724.2 426.6 L725.5 425.8 L726.8 424.8 L728.1 424 L729.4 423.3 L730.7 422.6 L732 421.5 L733.3 420.5 L734.6 420.4 L735.9 419.3 L736.5 419 L737.1 418.8 L737.7 417.6 L738.3 417.9 L738.9 417.7 L739.5 417.2 L740.1 416.3 L740.7 416.1 L741.3 415.7 L741.9 415.7 L742.5 415.6 L743.1 415.7 L743.7 414.8 L744.3 414.6 L744.9 414.6 L745.5 413.8 L746.1 413.8 L746.7 412.9 L747.3 412.6 L747.9 412.7 L748.5 409.8 L749.1 408.5 L749.7 405.5 L750.3 404.3 L750.9 403.3 L751.4 402.7 L751.4 444 L750.9 445.5 L750.3 447.5 L749.7 449 L749.1 451 L748.5 452.6 L747.9 454.2 L747.3 454.3 L746.7 454.6 L746.1 454.6 L745.5 454.6 L744.9 454.8 L744.3 454.8 L743.7 455 L743.1 455.1 L742.5 455.1 L741.9 455.2 L741.3 455.4 L740.7 455.6 L740.1 455.4 L739.5 455.6 L738.9 455.8 L738.3 455.9 L737.7 456 L737.1 456.2 L736.5 456.4 L735.9 456.7 L734.6 457 L733.3 456.9 L732 457.4 L730.7 457.8 L729.4 458.2 L728.1 458.2 L726.8 458.7 L725.5 459 L724.2 459.3 L722.9 459.6 L721.6 460 L720.3 460.1 L719 460.7 L717.7 460.8 L716.4 461.1 L715.1 461.4 L713.8 461.8 L712.5 462.2 L711.2 462.3 L709.9 462.7 L708.6 463.1 L707.3 463.4 L706 463.5 L704.7 464 L703.4 464.3 L702.1 464.6 L700.8 464.9 L699.5 465.2 L698.2 465.5 L696.9 465.9 L695.6 466.2 L694.3 466.5 L693 466.9 L691.7 467.2 L690.4 467.5 L689.1 467.7 L687.8 468 L686.5 468.6 L685.2 469.1 L683.9 469.5 L682.6 469.8 L681.3 470.2 L680 470.5 L678.7 470.8 L677.4 471.2 L676.1 471.8 L674.8 472.5 L673.5 472.9 L672.2 473 L669.2 473.1 L666.2 473.2 L663.2 473.3 L660.2 473.3 L657.2 473.5 L654.2 473.6 L651.2 473.7 L648.2 473.7 L645.2 473.9 L642.2 474.2 L639.2 474.3 L636.2 474.3 L633.2 474.4 L630.2 474.4 L627.2 474.5 L624.2 474.5 L621.2 474.5 L618.2 474.6 L615.2 474.6 L612.2 474.6 L609.2 474.6 L606.2 474.7 L603.2 474.7 L600.2 474.7 L597.2 474.7 L594.2 474.7 L591.2 474.8 L588.2 474.8 L585.2 474.8 L582.2 474.8 L579.2 474.9 L576.2 474.8 L573.2 474.8 L570.2 474.9 L567.2 474.8 L564.2 474.8 L561.2 474.9 L558.2 474.9 L555.2 474.8 L552.2 474.9 L549.2 474.8 L546.2 474.9 L543.2 474.9 L540.2 475 L537.2 475 L534.2 474.9 L531.2 475 L528.2 474.9 L525.2 474.9 L522.2 474.9 L519.2 475 L516.2 475 L513.2 474.9 L510.2 475 L507.2 475 L504.2 475 L501.2 475 L498.2 475 L495.2 475 L492.2 475.1 L489.2 475 L486.2 475 L483.2 475.1 L480.2 475.1 L477.2 475.1 L474.2 475.1 L471.2 475.1 L468.2 475.4 L465.2 475.7 L462.2 475.7 L459.2 475.7 L456.2 475.8 L453.2 475.7 L450.2 475.7 L447.2 475.7 L444.2 475.8 L441.2 475.8 L438.2 475.8 L435.2 475.9 L432.2 475.8 L429.2 475.8 L426.2 475.9 L423.2 475.9 L420.2 475.9 L417.2 475.9 L414.2 475.8 L411.2 475.9 L408.2 475.9 L405.2 476 L402.2 476 L399.2 476 L396.2 476 L393.2 476 L390.2 477 L387.2 477.7 L384.2 477.7 L382.6 477.7 L381 477.8 L379.4 477.8 L377.8 477.9 L376.2 477.9 L374.6 478 L373 478 L371.4 478.1 L369.8 478.1 L368.2 478.3 L366.6 478.3 L365 478.4 L363.4 478.4 L361.8 478.5 L360.2 478.6 L358.6 478.6 L357 478.7 L355.4 478.8 L353.8 478.9 L352.2 479 L350.6 479 L349 479.1 L347.4 479.2 L345.8 479.3 L344.2 479.4 L342.6 479.5 L341 479.6 L339.4 479.7 L337.8 479.9 L336.2 480.1 L334.6 480.3 L333 480.3 L331.4 480.3 L329.8 480.3 L328.2 480.3 L326.6 480.4 L325 480.4 L323.4 480.4 L321.8 480.4 L320.2 480.5 L318.6 480.5 L317 480.5 L315.4 480.5 L313.8 480.6 L312.2 480.6 L310.6 480.6 L309 480.6 L307.4 480.6 L305.8 480.7 L304.2 480.7 L302.6 480.7 L301 480.7 L299.4 480.8 L297.8 480.8 L296.2 480.8 L294.6 480.9 L293 480.9 L291.4 480.9 L289.8 481 L288.2 481 L286.6 481 L285 481 L283.4 481 L281.8 481 L280.2 481 L278.6 481 L277 481 L275.4 481 L273.8 481 L272.2 481 L270.6 481 L269 481 L267.4 481 L265.8 481 L264.2 481 L262.6 481 L261 481 L259.4 481 L257.8 481 L256.2 481 L254.6 481 L253 481 L251.4 481 L249.8 481 L248.2 481 L246.6 481 L245 481 L243.4 481 L241.8 481 L240.2 481 L238.6 481 L237 481 L229 481 L221 481 L213 481 L205 481 L197 481 L189 481 L181 481 L173 481 L165 481 L157 481 L149 481 L141 481 L133 481 L125 481 L117 481 L109 481 L101 481 Z" fill="url(#gTRS)"/>
<path d="M498.2 472.3 L501.2 470.6 L504.2 470.6 L507.2 470.5 L510.2 470.5 L513.2 470.4 L516.2 470.5 L519.2 470.4 L522.2 470.4 L525.2 470.4 L528.2 470.3 L531.2 470.4 L534.2 470.3 L537.2 470.3 L540.2 470.4 L543.2 470.2 L546.2 470.3 L549.2 470.1 L552.2 470.2 L555.2 470.1 L558.2 470.2 L561.2 470.1 L564.2 470.1 L567.2 470 L570.2 470.1 L573.2 470 L576.2 469.9 L579.2 470 L582.2 469.9 L585.2 470 L588.2 469.9 L591.2 469.8 L594.2 469.4 L597.2 469.2 L600.2 469.1 L603.2 468.7 L606.2 468.4 L609.2 468.2 L612.2 468 L615.2 467.6 L618.2 467.5 L621.2 467 L624.2 466.9 L627.2 466.6 L630.2 466.4 L633.2 466.1 L636.2 465.7 L639.2 465.6 L642.2 464.9 L645.2 463.9 L648.2 463.1 L651.2 462.4 L654.2 461.6 L657.2 460.9 L660.2 459.8 L663.2 459.1 L666.2 458.2 L669.2 457.8 L672.2 456.7 L673.5 456.7 L674.8 455.7 L676.1 454.7 L677.4 454 L678.7 452.9 L680 452.3 L681.3 451.6 L682.6 450.6 L683.9 450.3 L685.2 449 L686.5 448.3 L687.8 447.4 L689.1 446.5 L690.4 446.1 L691.7 445.1 L693 444.5 L694.3 443.8 L695.6 442.8 L696.9 442.3 L698.2 441.7 L699.5 440.7 L700.8 440.2 L702.1 439.1 L703.4 438.6 L704.7 437.7 L706 436.5 L707.3 436.1 L708.6 435.3 L709.9 434.7 L711.2 434 L712.5 433.5 L713.8 432.5 L715.1 431.4 L716.4 430.8 L717.7 429.9 L719 429.1 L720.3 428.6 L721.6 428 L722.9 426.8 L724.2 426.6 L725.5 425.8 L726.8 424.8 L728.1 424 L729.4 423.3 L730.7 422.6 L732 421.5 L733.3 420.5 L734.6 420.4 L735.9 419.3 L736.5 419 L737.1 418.8 L737.7 417.6 L738.3 417.9 L738.9 417.7 L739.5 417.2 L740.1 416.3 L740.7 416.1 L741.3 415.7 L741.9 415.7 L742.5 415.6 L743.1 415.7 L743.7 414.8 L744.3 414.6 L744.9 414.6 L745.5 413.8 L746.1 413.8 L746.7 412.9 L747.3 412.6 L747.9 412.7 L748.5 409.8 L749.1 408.5 L749.7 405.5 L750.3 404.3 L750.9 403.3 L751.4 402.7" fill="none" stroke="#a52a2a" stroke-width="1.7" stroke-linejoin="round"/>
<path d="M101 481 L109 481 L117 481 L125 481 L133 481 L141 481 L149 481 L157 481 L165 481 L173 481 L181 481 L189 481 L197 481 L205 481 L213 481 L221 481 L229 481 L237 481 L238.6 481 L240.2 481 L241.8 481 L243.4 481 L245 481 L246.6 481 L248.2 481 L249.8 481 L251.4 481 L253 481 L254.6 481 L256.2 481 L257.8 481 L259.4 481 L261 481 L262.6 481 L264.2 481 L265.8 481 L267.4 481 L269 481 L270.6 481 L272.2 481 L273.8 481 L275.4 481 L277 481 L278.6 481 L280.2 481 L281.8 481 L283.4 481 L285 481 L286.6 481 L288.2 481 L289.8 481 L291.4 480.9 L293 480.9 L294.6 480.9 L296.2 480.8 L297.8 480.7 L299.4 480.7 L301 480.6 L302.6 480.6 L304.2 480.5 L305.8 480.5 L307.4 480.5 L309 480.4 L310.6 480.4 L312.2 480.3 L313.8 480.3 L315.4 480.3 L317 480.2 L318.6 480.2 L320.2 480.1 L321.8 480.1 L323.4 480.1 L325 480 L326.6 480 L328.2 479.9 L329.8 479.9 L331.4 479.9 L333 479.8 L334.6 479.8 L336.2 479.5 L337.8 479.2 L339.4 478.9 L341 478.7 L342.6 478.6 L344.2 478.5 L345.8 478.3 L347.4 478.2 L349 478.1 L350.6 477.9 L352.2 477.8 L353.8 477.7 L355.4 477.6 L357 477.4 L358.6 477.3 L360.2 477.2 L361.8 477 L363.4 476.9 L365 476.7 L366.6 476.4 L368.2 476.3 L369.8 476.1 L371.4 475.9 L373 475.8 L374.6 475.6 L376.2 475.5 L377.8 475.4 L379.4 475.2 L381 475.2 L382.6 475.1 L384.2 475.1 L387.2 475 L390.2 472 L393.2 468.6 L396.2 468.5 L399.2 468.3 L402.2 468.1 L405.2 468.1 L408.2 467.9 L411.2 467.8 L414.2 467.6 L417.2 467.7 L420.2 467.5 L423.2 467.3 L426.2 467 L429.2 466.8 L432.2 466.5 L435.2 466.4 L438.2 465.9 L441.2 465.8 L444.2 465.6 L447.2 465.3 L450.2 464.8 L453.2 464.8 L456.2 464.6 L459.2 464.3 L462.2 464.1 L465.2 463.7 L468.2 463.1 L471.2 462.5 L474.2 462.3 L477.2 462.3 L480.2 461.9 L483.2 461.7 L486.2 461.3 L489.2 461 L492.2 460.8 L495.2 460.8 L498.2 457.6 L501.2 455.4 L504.2 454.8 L507.2 454.3 L510.2 453.6 L513.2 453 L516.2 452.4 L519.2 451.3 L522.2 450.7 L525.2 450.1 L528.2 449.2 L531.2 448.8 L534.2 448.2 L537.2 447.7 L540.2 447 L543.2 445.8 L546.2 445.6 L549.2 444.7 L552.2 444 L555.2 443.6 L558.2 442.9 L561.2 442.1 L564.2 441.1 L567.2 440.6 L570.2 440.1 L573.2 438.9 L576.2 438.5 L579.2 437.6 L582.2 437.1 L585.2 437 L588.2 435.9 L591.2 435.2 L594.2 434.2 L597.2 433.8 L600.2 433 L603.2 432.4 L606.2 431.9 L609.2 430.8 L612.2 430.8 L615.2 429.3 L618.2 429.4 L621.2 428.6 L624.2 427.9 L627.2 426.6 L630.2 425.8 L633.2 426 L636.2 424.7 L639.2 424.2 L642.2 422.7 L645.2 422 L648.2 420.4 L651.2 419.5 L654.2 417.8 L657.2 417.2 L660.2 414.9 L663.2 414.6 L666.2 413.3 L669.2 411.9 L672.2 410.7 L673.5 410.8 L674.8 409.1 L676.1 408.6 L677.4 406.8 L678.7 405.4 L680 404.3 L681.3 403.3 L682.6 402.2 L683.9 401.4 L685.2 399.7 L686.5 398.1 L687.8 397.6 L689.1 395.4 L690.4 395.6 L691.7 394 L693 392.9 L694.3 391.1 L695.6 390.1 L696.9 389.4 L698.2 387.7 L699.5 387.1 L700.8 385.7 L702.1 383.6 L703.4 382.1 L704.7 380.4 L706 378.6 L707.3 377.9 L708.6 376.3 L709.9 375.2 L711.2 372.7 L712.5 371.6 L713.8 369.8 L715.1 368.8 L716.4 367 L717.7 364.8 L719 363.5 L720.3 362.9 L721.6 361 L722.9 358.4 L724.2 358.4 L725.5 356.9 L726.8 355 L728.1 352.7 L729.4 351 L730.7 350.7 L732 348.8 L733.3 346.9 L734.6 345.9 L735.9 343.6 L736.5 343.6 L737.1 342.9 L737.7 341.8 L738.3 340.6 L738.9 339.1 L739.5 339.4 L740.1 336.8 L740.7 337.8 L741.3 335.5 L741.9 334.1 L742.5 332.7 L743.1 332.7 L743.7 332.3 L744.3 331.1 L744.9 330 L745.5 330.3 L746.1 330.4 L746.7 329.5 L747.3 329.8 L747.9 329 L748.5 324.3 L749.1 322.7 L749.7 320.6 L750.3 320.4 L750.9 318.3 L751.4 316.5 L751.4 402.7 L750.9 403.3 L750.3 404.3 L749.7 405.5 L749.1 408.5 L748.5 409.8 L747.9 412.7 L747.3 412.6 L746.7 412.9 L746.1 413.8 L745.5 413.8 L744.9 414.6 L744.3 414.6 L743.7 414.8 L743.1 415.7 L742.5 415.6 L741.9 415.7 L741.3 415.7 L740.7 416.1 L740.1 416.3 L739.5 417.2 L738.9 417.7 L738.3 417.9 L737.7 417.6 L737.1 418.8 L736.5 419 L735.9 419.3 L734.6 420.4 L733.3 420.5 L732 421.5 L730.7 422.6 L729.4 423.3 L728.1 424 L726.8 424.8 L725.5 425.8 L724.2 426.6 L722.9 426.8 L721.6 428 L720.3 428.6 L719 429.1 L717.7 429.9 L716.4 430.8 L715.1 431.4 L713.8 432.5 L712.5 433.5 L711.2 434 L709.9 434.7 L708.6 435.3 L707.3 436.1 L706 436.5 L704.7 437.7 L703.4 438.6 L702.1 439.1 L700.8 440.2 L699.5 440.7 L698.2 441.7 L696.9 442.3 L695.6 442.8 L694.3 443.8 L693 444.5 L691.7 445.1 L690.4 446.1 L689.1 446.5 L687.8 447.4 L686.5 448.3 L685.2 449 L683.9 450.3 L682.6 450.6 L681.3 451.6 L680 452.3 L678.7 452.9 L677.4 454 L676.1 454.7 L674.8 455.7 L673.5 456.7 L672.2 456.7 L669.2 457.8 L666.2 458.2 L663.2 459.1 L660.2 459.8 L657.2 460.9 L654.2 461.6 L651.2 462.4 L648.2 463.1 L645.2 463.9 L642.2 464.9 L639.2 465.6 L636.2 465.7 L633.2 466.1 L630.2 466.4 L627.2 466.6 L624.2 466.9 L621.2 467 L618.2 467.5 L615.2 467.6 L612.2 468 L609.2 468.2 L606.2 468.4 L603.2 468.7 L600.2 469.1 L597.2 469.2 L594.2 469.4 L591.2 469.8 L588.2 469.9 L585.2 470 L582.2 469.9 L579.2 470 L576.2 469.9 L573.2 470 L570.2 470.1 L567.2 470 L564.2 470.1 L561.2 470.1 L558.2 470.2 L555.2 470.1 L552.2 470.2 L549.2 470.1 L546.2 470.3 L543.2 470.2 L540.2 470.4 L537.2 470.3 L534.2 470.3 L531.2 470.4 L528.2 470.3 L525.2 470.4 L522.2 470.4 L519.2 470.4 L516.2 470.5 L513.2 470.4 L510.2 470.5 L507.2 470.5 L504.2 470.6 L501.2 470.6 L498.2 472.3 L495.2 475 L492.2 475.1 L489.2 475 L486.2 475 L483.2 475.1 L480.2 475.1 L477.2 475.1 L474.2 475.1 L471.2 475.1 L468.2 475.4 L465.2 475.7 L462.2 475.7 L459.2 475.7 L456.2 475.8 L453.2 475.7 L450.2 475.7 L447.2 475.7 L444.2 475.8 L441.2 475.8 L438.2 475.8 L435.2 475.9 L432.2 475.8 L429.2 475.8 L426.2 475.9 L423.2 475.9 L420.2 475.9 L417.2 475.9 L414.2 475.8 L411.2 475.9 L408.2 475.9 L405.2 476 L402.2 476 L399.2 476 L396.2 476 L393.2 476 L390.2 477 L387.2 477.7 L384.2 477.7 L382.6 477.7 L381 477.8 L379.4 477.8 L377.8 477.9 L376.2 477.9 L374.6 478 L373 478 L371.4 478.1 L369.8 478.1 L368.2 478.3 L366.6 478.3 L365 478.4 L363.4 478.4 L361.8 478.5 L360.2 478.6 L358.6 478.6 L357 478.7 L355.4 478.8 L353.8 478.9 L352.2 479 L350.6 479 L349 479.1 L347.4 479.2 L345.8 479.3 L344.2 479.4 L342.6 479.5 L341 479.6 L339.4 479.7 L337.8 479.9 L336.2 480.1 L334.6 480.3 L333 480.3 L331.4 480.3 L329.8 480.3 L328.2 480.3 L326.6 480.4 L325 480.4 L323.4 480.4 L321.8 480.4 L320.2 480.5 L318.6 480.5 L317 480.5 L315.4 480.5 L313.8 480.6 L312.2 480.6 L310.6 480.6 L309 480.6 L307.4 480.6 L305.8 480.7 L304.2 480.7 L302.6 480.7 L301 480.7 L299.4 480.8 L297.8 480.8 L296.2 480.8 L294.6 480.9 L293 480.9 L291.4 480.9 L289.8 481 L288.2 481 L286.6 481 L285 481 L283.4 481 L281.8 481 L280.2 481 L278.6 481 L277 481 L275.4 481 L273.8 481 L272.2 481 L270.6 481 L269 481 L267.4 481 L265.8 481 L264.2 481 L262.6 481 L261 481 L259.4 481 L257.8 481 L256.2 481 L254.6 481 L253 481 L251.4 481 L249.8 481 L248.2 481 L246.6 481 L245 481 L243.4 481 L241.8 481 L240.2 481 L238.6 481 L237 481 L229 481 L221 481 L213 481 L205 481 L197 481 L189 481 L181 481 L173 481 L165 481 L157 481 L149 481 L141 481 L133 481 L125 481 L117 481 L109 481 L101 481 Z" fill="url(#gPC)"/>
<path d="M293 480.9 L294.6 480.9 L296.2 480.8 L297.8 480.7 L299.4 480.7 L301 480.6 L302.6 480.6 L304.2 480.5 L305.8 480.5 L307.4 480.5 L309 480.4 L310.6 480.4 L312.2 480.3 L313.8 480.3 L315.4 480.3 L317 480.2 L318.6 480.2 L320.2 480.1 L321.8 480.1 L323.4 480.1 L325 480 L326.6 480 L328.2 479.9 L329.8 479.9 L331.4 479.9 L333 479.8 L334.6 479.8 L336.2 479.5 L337.8 479.2 L339.4 478.9 L341 478.7 L342.6 478.6 L344.2 478.5 L345.8 478.3 L347.4 478.2 L349 478.1 L350.6 477.9 L352.2 477.8 L353.8 477.7 L355.4 477.6 L357 477.4 L358.6 477.3 L360.2 477.2 L361.8 477 L363.4 476.9 L365 476.7 L366.6 476.4 L368.2 476.3 L369.8 476.1 L371.4 475.9 L373 475.8 L374.6 475.6 L376.2 475.5 L377.8 475.4 L379.4 475.2 L381 475.2 L382.6 475.1 L384.2 475.1 L387.2 475 L390.2 472 L393.2 468.6 L396.2 468.5 L399.2 468.3 L402.2 468.1 L405.2 468.1 L408.2 467.9 L411.2 467.8 L414.2 467.6 L417.2 467.7 L420.2 467.5 L423.2 467.3 L426.2 467 L429.2 466.8 L432.2 466.5 L435.2 466.4 L438.2 465.9 L441.2 465.8 L444.2 465.6 L447.2 465.3 L450.2 464.8 L453.2 464.8 L456.2 464.6 L459.2 464.3 L462.2 464.1 L465.2 463.7 L468.2 463.1 L471.2 462.5 L474.2 462.3 L477.2 462.3 L480.2 461.9 L483.2 461.7 L486.2 461.3 L489.2 461 L492.2 460.8 L495.2 460.8 L498.2 457.6 L501.2 455.4 L504.2 454.8 L507.2 454.3 L510.2 453.6 L513.2 453 L516.2 452.4 L519.2 451.3 L522.2 450.7 L525.2 450.1 L528.2 449.2 L531.2 448.8 L534.2 448.2 L537.2 447.7 L540.2 447 L543.2 445.8 L546.2 445.6 L549.2 444.7 L552.2 444 L555.2 443.6 L558.2 442.9 L561.2 442.1 L564.2 441.1 L567.2 440.6 L570.2 440.1 L573.2 438.9 L576.2 438.5 L579.2 437.6 L582.2 437.1 L585.2 437 L588.2 435.9 L591.2 435.2 L594.2 434.2 L597.2 433.8 L600.2 433 L603.2 432.4 L606.2 431.9 L609.2 430.8 L612.2 430.8 L615.2 429.3 L618.2 429.4 L621.2 428.6 L624.2 427.9 L627.2 426.6 L630.2 425.8 L633.2 426 L636.2 424.7 L639.2 424.2 L642.2 422.7 L645.2 422 L648.2 420.4 L651.2 419.5 L654.2 417.8 L657.2 417.2 L660.2 414.9 L663.2 414.6 L666.2 413.3 L669.2 411.9 L672.2 410.7 L673.5 410.8 L674.8 409.1 L676.1 408.6 L677.4 406.8 L678.7 405.4 L680 404.3 L681.3 403.3 L682.6 402.2 L683.9 401.4 L685.2 399.7 L686.5 398.1 L687.8 397.6 L689.1 395.4 L690.4 395.6 L691.7 394 L693 392.9 L694.3 391.1 L695.6 390.1 L696.9 389.4 L698.2 387.7 L699.5 387.1 L700.8 385.7 L702.1 383.6 L703.4 382.1 L704.7 380.4 L706 378.6 L707.3 377.9 L708.6 376.3 L709.9 375.2 L711.2 372.7 L712.5 371.6 L713.8 369.8 L715.1 368.8 L716.4 367 L717.7 364.8 L719 363.5 L720.3 362.9 L721.6 361 L722.9 358.4 L724.2 358.4 L725.5 356.9 L726.8 355 L728.1 352.7 L729.4 351 L730.7 350.7 L732 348.8 L733.3 346.9 L734.6 345.9 L735.9 343.6 L736.5 343.6 L737.1 342.9 L737.7 341.8 L738.3 340.6 L738.9 339.1 L739.5 339.4 L740.1 336.8 L740.7 337.8 L741.3 335.5 L741.9 334.1 L742.5 332.7 L743.1 332.7 L743.7 332.3 L744.3 331.1 L744.9 330 L745.5 330.3 L746.1 330.4 L746.7 329.5 L747.3 329.8 L747.9 329 L748.5 324.3 L749.1 322.7 L749.7 320.6 L750.3 320.4 L750.9 318.3 L751.4 316.5" fill="none" stroke="#2e5bff" stroke-width="1.7" stroke-linejoin="round"/>
<path d="M107 480.55H196" stroke="#a6dcee" stroke-width="1.3"/><path d="M196 480.55H293" stroke="#a3cfc4" stroke-width="1.3"/>
</g>
<circle cx="751.4" cy="443.4" r="9" fill="#daa520" fill-opacity="0.22"/><rect x="746.4" y="438.4" width="10" height="10" fill="#daa520" stroke="#fff" stroke-width="1.3" stroke-linejoin="round"/>
<circle cx="751.4" cy="456.1" r="9" fill="#40c4e8" fill-opacity="0.22"/><path d="M746.0 460.3h10.8l-5.4-9.6z" fill="#40c4e8" stroke="#fff" stroke-width="1.3" stroke-linejoin="round"/>
<circle cx="751.4" cy="466.4" r="9" fill="#ff4500" fill-opacity="0.22"/><path d="M746.1999999999999 463.0h10.4l-5.2 7.6z" fill="#ff4500" stroke="#fff" stroke-width="1.3" stroke-linejoin="round"/>
<circle cx="751.4" cy="474.2" r="9" fill="#b0c4de" fill-opacity="0.22"/><circle cx="751.4" cy="474.2" r="5" fill="#b0c4de" stroke="#fff" stroke-width="1.3" stroke-linejoin="round"/>
<circle cx="751.4" cy="479.2" r="9" fill="#8a2be2" fill-opacity="0.22"/><path d="M751.4 473.7l1.6 3.6 3.9.4-2.9 2.7.8 3.9-3.4-2-3.4 2 .8-3.9-2.9-2.7 3.9-.4z" fill="#8a2be2" stroke="#fff" stroke-width="1.3" stroke-linejoin="round"/>
<circle cx="751.4" cy="480.2" r="9" fill="#ffd700" fill-opacity="0.22"/><rect x="746.4" y="475.2" width="10" height="10" fill="#d9c02a" stroke="#fff" stroke-width="1.3" stroke-linejoin="round"/>
<circle cx="751.4" cy="481.6" r="9" fill="#4682b4" fill-opacity="0.22"/><path d="M746.1999999999999 486.2h10.4l-5.2-9.6z" fill="#4682b4" stroke="#fff" stroke-width="1.3" stroke-linejoin="round"/>
<circle cx="751.4" cy="402.2" r="9" fill="#a52a2a" fill-opacity="0.22"/><path d="M751.4 397.0l5 5.2-5 5.2-5-5.2z" fill="#a52a2a" stroke="#fff" stroke-width="0.8"/>
<circle cx="751.4" cy="316.5" r="9.2" fill="#2e5bff" fill-opacity="0.22"/><circle cx="751.4" cy="316.5" r="5" fill="#2e5bff"/>
</svg>
<div class="lg" style="left:126.8px;top:528.7px;letter-spacing:-0.12px"><i style="background:linear-gradient(#2e5bffd0 0,#2e5bffd0 42%,#2e5bff66 43%,#2e5bff2a 100%)"></i>Private Credit</div>
<div class="lg" style="left:329.2px;top:528.7px;letter-spacing:-0.1px"><i style="background:linear-gradient(#a52a2ad0 0,#a52a2ad0 42%,#a52a2a66 43%,#a52a2a2a 100%)"></i>US Treasury Debt</div>
<div class="lg" style="left:531.3px;top:528.7px;letter-spacing:-0.06px"><i style="background:linear-gradient(#daa520d0 0,#daa520d0 42%,#daa52066 43%,#daa5202a 100%)"></i>Commodities</div>
<div class="lg" style="left:126.8px;top:546.3px;letter-spacing:0px"><i style="background:linear-gradient(#40c4e8d0 0,#40c4e8d0 42%,#40c4e866 43%,#40c4e82a 100%)"></i>Institutional Alternative Funds</div>
<div class="lg" style="left:329.2px;top:546.3px;letter-spacing:-0.08px"><i style="background:linear-gradient(#ff4500d0 0,#ff4500d0 42%,#ff450066 43%,#ff45002a 100%)"></i>Stocks</div>
<div class="lg" style="left:531.3px;top:546.3px;letter-spacing:-0.07px"><i style="background:linear-gradient(#b0c4ded0 0,#b0c4ded0 42%,#b0c4de66 43%,#b0c4de2a 100%)"></i>non-US Government Debt</div>
<div class="lg" style="left:126.8px;top:563.9px;letter-spacing:-0.12px"><i style="background:linear-gradient(#8a2be2d0 0,#8a2be2d0 42%,#8a2be266 43%,#8a2be22a 100%)"></i>Corporate Bonds</div>
<div class="lg" style="left:329.2px;top:563.9px;letter-spacing:-0.1px"><i style="background:linear-gradient(#ffd700d0 0,#ffd700d0 42%,#ffd70066 43%,#ffd7002a 100%)"></i>Private Equity</div>
<div class="lg" style="left:531.3px;top:563.9px;letter-spacing:0px"><i style="background:linear-gradient(#4682b4d0 0,#4682b4d0 42%,#4682b466 43%,#4682b42a 100%)"></i>Actively-Managed Strategies</div>
<div class="tip"><div class="dt">10/9/25</div><div class="tot mono">$33,429,644,223</div><hr>
<div class="row" style="top:54.6px"><s style="background:#2e5bff"></s><span style="letter-spacing:0.14px">Private Credit</span><em class="mono">$17,511,451,254</em></div>
<div class="row" style="top:74.0px"><s style="background:#a52a2a"></s><span style="letter-spacing:0.07px">US Treasury Debt</span><em class="mono">$8,405,929,210</em></div>
<div class="row" style="top:93.5px"><s style="background:#daa520"></s><span style="letter-spacing:0.19px">Commodities</span><em class="mono">$2,453,364,030</em></div>
<div class="row" style="top:112.9px"><s style="background:#40c4e8"></s><span style="letter-spacing:0.225px">Institutional Alternative Funds</span><em class="mono">$2,415,290,611</em></div>
<div class="row" style="top:132.4px"><s style="background:#ff4500"></s><span style="letter-spacing:0.15px">Stocks</span><em class="mono">$1,271,244,097</em></div>
<div class="row" style="top:151.8px"><s style="background:#b0c4de"></s><span style="letter-spacing:0.19px">non-US Government Debt</span><em class="mono">$1,008,009,716</em></div>
<div class="row" style="top:171.3px"><s style="background:#8a2be2"></s><span style="letter-spacing:0.18px">Corporate Bonds</span><em class="mono">$260,707,878</em></div>
<div class="row" style="top:190.8px"><s style="background:#ffd700"></s><span style="letter-spacing:0.09px">Private Equity</span><em class="mono">$102,720,544</em></div>
<div class="row" style="top:210.2px"><s style="background:#4682b4"></s><span style="letter-spacing:0.23px">Actively-Managed Strategies</span><em class="mono">$926,883</em></div>
</div>
<svg class="ov" viewBox="0 0 1200 626">
<path d="M997.8 447.8L997.80 409.80A38.0 38.0 0 1 1 993.50 485.56Z" fill="#8aa4ff" stroke="#fff" stroke-width="1" stroke-linejoin="round"/>
<path d="M997.8 447.8L993.50 485.56A38.0 38.0 0 0 1 960.01 443.83Z" fill="#d18a8a" stroke="#fff" stroke-width="1" stroke-linejoin="round"/>
<path d="M997.8 447.8L960.01 443.83A38.0 38.0 0 0 1 966.11 426.83Z" fill="#a9e3f4" stroke="#fff" stroke-width="1" stroke-linejoin="round"/>
<path d="M997.8 447.8L966.11 426.83A38.0 38.0 0 0 1 979.38 414.56Z" fill="#e9c47c" stroke="#fff" stroke-width="1" stroke-linejoin="round"/>
<path d="M997.8 447.8L979.38 414.56A38.0 38.0 0 0 1 988.48 410.96Z" fill="#ff8c66" stroke="#fff" stroke-width="1" stroke-linejoin="round"/>
<path d="M997.8 447.8L988.48 410.96A38.0 38.0 0 0 1 995.48 409.87Z" fill="#d3deed" stroke="#fff" stroke-width="1" stroke-linejoin="round"/>
<path d="M997.8 447.8L995.48 409.87A38.0 38.0 0 0 1 997.27 409.80Z" fill="#c5a0ee" stroke="#fff" stroke-width="1" stroke-linejoin="round"/>
<path d="M997.8 447.8L997.27 409.80A38.0 38.0 0 0 1 997.80 409.80Z" fill="#ffe766" stroke="#fff" stroke-width="1" stroke-linejoin="round"/>
<g fill="none" stroke-width="1.4" stroke-linecap="round">
<path d="M1037 450.1L1068 452.1" stroke="#8aa4ff"/>
<path d="M948 495.7Q957 482 963 476T968.2 471.6" stroke="#d18a8a"/>
<path d="M927.2 442.7L961.5 430.2" stroke="#a9e3f4"/>
<path d="M959.9 390.6Q966 409 972 420" stroke="#e9c47c"/>
</g>
<g font-family="Liberation Sans,sans-serif">
<text x="1077.8" y="449.09999999999997" text-anchor="start" font-size="12" textLength="70" lengthAdjust="spacingAndGlyphs" fill="#9aa8c3" stroke="#9aa8c3" stroke-width="0.12">Private Credit</text>
<text x="1077.8" y="464.9" text-anchor="start" font-size="13" textLength="38.5" lengthAdjust="spacingAndGlyphs" fill="#3d4657" stroke="#3d4657" stroke-width="0.2">$17.5B</text>
<text x="950.6" y="387.09999999999997" text-anchor="end" font-size="12" textLength="67.7" lengthAdjust="spacingAndGlyphs" fill="#9aa8c3" stroke="#9aa8c3" stroke-width="0.12">Commodities</text>
<text x="950.6" y="402.59999999999997" text-anchor="end" font-size="13" textLength="33.5" lengthAdjust="spacingAndGlyphs" fill="#3d4657" stroke="#3d4657" stroke-width="0.2">$2.5B</text>
<text x="938.6" y="492.5" text-anchor="end" font-size="12" textLength="90.4" lengthAdjust="spacingAndGlyphs" fill="#9aa8c3" stroke="#9aa8c3" stroke-width="0.12">US Treasury Debt</text>
<text x="938.6" y="508.0" text-anchor="end" font-size="13" textLength="34" lengthAdjust="spacingAndGlyphs" fill="#3d4657" stroke="#3d4657" stroke-width="0.2">$8.4B</text>
<text x="1011.8" y="426.4" text-anchor="end" font-size="12" textLength="60.9" lengthAdjust="spacingAndGlyphs" fill="#9aa8c3" stroke="#fff" stroke-width="2.6" stroke-linejoin="round" stroke-opacity="0.8" paint-order="stroke">Institutional</text>
<text x="1011.8" y="439.9" text-anchor="end" font-size="12" textLength="55.5" lengthAdjust="spacingAndGlyphs" fill="#9aa8c3" stroke="#fff" stroke-width="2.6" stroke-linejoin="round" stroke-opacity="0.8" paint-order="stroke">Alternative</text>
<text x="1011.8" y="453.4" text-anchor="end" font-size="12" textLength="31" lengthAdjust="spacingAndGlyphs" fill="#9aa8c3" stroke="#fff" stroke-width="2.6" stroke-linejoin="round" stroke-opacity="0.8" paint-order="stroke">Funds</text>
<text x="1011.8" y="468.7" text-anchor="end" font-size="13" textLength="34" lengthAdjust="spacingAndGlyphs" fill="#3d4657" stroke="#fff" stroke-width="2.6" stroke-linejoin="round" stroke-opacity="0.8" paint-order="stroke">$2.6B</text>
</g>
<g fill="none" stroke="#d2d2d2"><circle cx="1081.3" cy="575.5" r="10" stroke-width="1.4"/><g stroke-width="1"><ellipse cx="1081.3" cy="575.5" rx="4.6" ry="10"/><path d="M1081.3 565.5V585.5M1071.3 575.5H1091.3M1072.6 569.5Q1081.3 573.2 1090 569.5M1072.6 581.5Q1081.3 577.8 1090 581.5"/></g></g>
<text x="1094.6" y="582.9" font-size="27" fill="#cfcfcf" font-family="Liberation Sans,sans-serif" textLength="47.5" lengthAdjust="spacingAndGlyphs">rwa</text>
<text x="1142.5" y="583.5" font-size="11" fill="#d6d6d6" font-family="Liberation Sans,sans-serif" textLength="21" lengthAdjust="spacingAndGlyphs">.xyz</text>
<text x="1162.6" y="602" font-size="11" fill="#b9b9bd" text-anchor="end" font-family="Liberation Sans,sans-serif" textLength="85" lengthAdjust="spacingAndGlyphs">as of 10/10/2025</text>
</svg>
</body>
</html>
